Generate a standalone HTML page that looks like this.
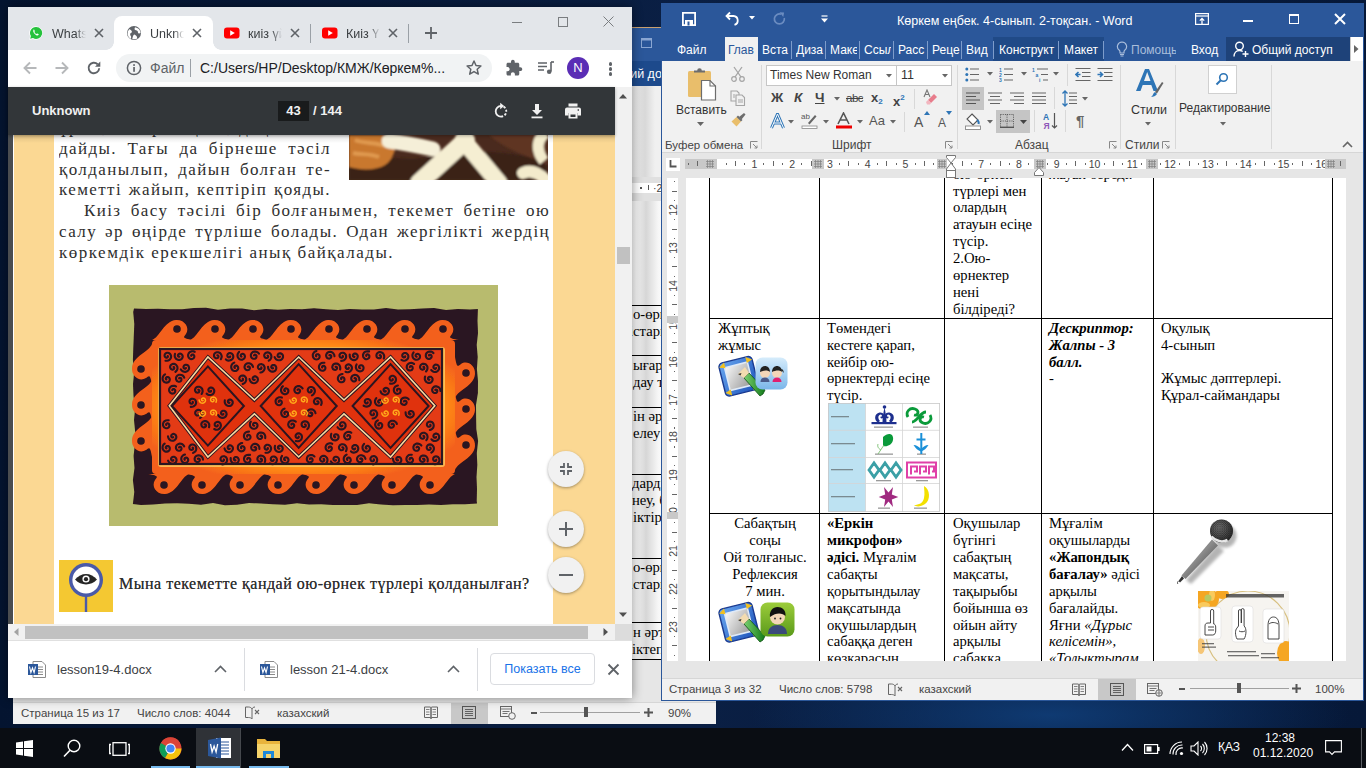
<!DOCTYPE html>
<html><head><meta charset="utf-8">
<style>
*{margin:0;padding:0;box-sizing:border-box}
html,body{width:1366px;height:768px;overflow:hidden}
body{position:relative;background:#081a38;font-family:"Liberation Sans",sans-serif;color:#000}
.a{position:absolute}
.serif{font-family:"Liberation Serif",serif}
.tt{font-size:12.5px;line-height:16px;color:#3c4043;white-space:nowrap;overflow:hidden;-webkit-mask-image:linear-gradient(90deg,#000 70%,transparent)}
.pdft{font-size:17px;line-height:21px;color:#2e2e2e;letter-spacing:1.4px;text-align:justify;text-align-last:justify;height:21px;overflow:hidden}
.pdft2{font-size:17px;line-height:21px;color:#2e2e2e;white-space:nowrap;letter-spacing:1.5px}
.zb{width:36px;height:36px;border-radius:18px;background:#f1f1f1;box-shadow:0 1px 3px rgba(0,0,0,.35)}
.zb svg{display:block}
.shelf{font-size:13px;line-height:16px;color:#3c4043;white-space:nowrap}
.wtab{top:42px;font-size:12px;line-height:16px;color:#fff;white-space:nowrap}
.rl{font-size:12px;line-height:14px;color:#444;white-space:nowrap}
.dt{font-family:"Liberation Serif",serif;font-size:14.67px;line-height:16.87px;color:#000;white-space:nowrap}
.tb{background:#000}
.rn{font-size:10.5px;line-height:14px;color:#444}
.st{top:682px;font-size:11.5px;line-height:14px;color:#444;white-space:nowrap}
</style></head>
<body>
<div class="a" style="left:0;top:0;width:1366px;height:728px;background:radial-gradient(ellipse 300px 60px at 1050px 715px,#0f3a72,rgba(15,58,114,0)),linear-gradient(90deg,#041430 0%,#0a1f44 50%,#061838 100%)"></div>
<!-- BEHIND WORD WINDOW -->
<div class="a" style="left:13px;top:27px;width:703px;height:697px;background:#e6e6e6;border-top:1px solid #c8a070"></div>
<div class="a" style="left:13px;top:28px;width:703px;height:33px;background:#2b579a"></div>
<svg class="a" style="left:641px;top:38px" width="11" height="10" viewBox="0 0 11 10"><rect x=".5" y=".5" width="10" height="9" fill="none" stroke="#8aa6d2" stroke-width="1"/><rect x=".5" y=".5" width="10" height="2" fill="#8aa6d2"/></svg>
<div class="a" style="left:13px;top:61px;width:703px;height:25px;background:#1d4a8c"></div>
<div class="a" style="left:603px;top:66px;font-size:12.5px;line-height:16px;color:#fff;white-space:nowrap">Общий доступ</div>
<div class="a" style="left:13px;top:86px;width:703px;height:91px;background:linear-gradient(90deg,#f1f1f1 0,#f1f1f1 620px,#d8d8d8 632px,#f0f0f0 642px,#f0f0f0 652px,#e2e2e2 661px)"></div>
<div class="a" style="left:13px;top:177px;width:703px;height:24px;background:#e0e0e0"></div>
<div class="a" style="left:632px;top:183px;width:50px;height:10px;background:#fff"></div>
<div class="a" style="left:640px;top:187px;width:1.5px;height:1.5px;background:#555"></div>
<div class="a" style="left:648px;top:185px;width:1px;height:5px;background:#555"></div>
<div class="a rn" style="left:653px;top:181px">·22</div>
<div class="a" style="left:13px;top:201px;width:703px;height:458px;background:linear-gradient(90deg,#fff 0,#fff 620px,#d6d6d6 633px,#f6f6f6 645px,#fdfdfd 652px,#e8e8e8 661px)"></div>
<div class="a" style="left:13px;top:659px;width:703px;height:20px;background:#e6e6e6"></div>
<div class="a tb" style="left:600px;top:304.5px;width:80px;height:1.3px"></div>
<div class="a tb" style="left:600px;top:355px;width:80px;height:1.3px"></div>
<div class="a tb" style="left:600px;top:406.5px;width:80px;height:1.3px"></div>
<div class="a tb" style="left:600px;top:473.5px;width:80px;height:1.3px"></div>
<div class="a tb" style="left:600px;top:557.5px;width:80px;height:1.3px"></div>
<div class="a tb" style="left:600px;top:622px;width:80px;height:1.3px"></div>
<div class="a tb" style="left:600px;top:659px;width:80px;height:1.3px"></div>
<div class="a dt" style="left:633px;top:306px">о-өрнек</div>
<div class="a dt" style="left:629px;top:323px">істары</div>
<div class="a dt" style="left:633px;top:357px">ығарма</div>
<div class="a dt" style="left:633px;top:374px">дау т</div>
<div class="a dt" style="left:633px;top:408px">ін әрт</div>
<div class="a dt" style="left:633px;top:425px">елеу</div>
<div class="a dt" style="left:632px;top:475px">дардың</div>
<div class="a dt" style="left:632px;top:492px">неу, б</div>
<div class="a dt" style="left:633px;top:509px">іктіру</div>
<div class="a dt" style="left:633px;top:559px">о-өрнек</div>
<div class="a dt" style="left:629px;top:576px">істары</div>
<div class="a dt" style="left:633px;top:624px">н әрт</div>
<div class="a dt" style="left:632px;top:641px">іктеп</div>
<div class="a" style="left:13px;top:702px;width:703px;height:22px;background:#f1f1f1;border-top:1px solid #d6d6d6"></div>
<div class="a st" style="left:21px;top:706px">Страница 15 из 17</div>
<div class="a st" style="left:137px;top:706px">Число слов: 4044</div>
<svg class="a" style="left:245px;top:706px" width="15" height="14" viewBox="0 0 15 14"><path d="M0.5 1h3c1.5 0 3 .8 3.5 2v10c-.5-1-2-1.5-3.5-1.5h-3z" fill="none" stroke="#666" stroke-width="1"/><path d="M7 3c.5-1.2 1.5-2 3-2" stroke="#666" stroke-width="1" fill="none"/><path d="M10 4l4 4M14 4l-4 4" stroke="#666" stroke-width="1.1"/></svg>
<div class="a st" style="left:277px;top:706px">казахский</div>
<svg class="a" style="left:424px;top:706px" width="14" height="13" viewBox="0 0 14 13"><path d="M0.5 1h5.5c.5 0 1 .3 1 1v10.5c0-.5-.5-1-1-1H.5zM13.5 1H8c-.5 0-1 .3-1 1v10.5c0-.5.5-1 1-1h5.5z" fill="none" stroke="#666" stroke-width="1"/><path d="M2 3.5h3.5M2 6h3.5M2 8.5h3.5M8.5 3.5H12M8.5 6H12M8.5 8.5H12" stroke="#666" stroke-width=".8"/></svg>
<div class="a" style="left:451px;top:703px;width:37px;height:21px;background:#c8c8c8"></div>
<svg class="a" style="left:462px;top:706px" width="14" height="13" viewBox="0 0 14 13"><rect x=".5" y=".5" width="13" height="12" fill="none" stroke="#555" stroke-width="1"/><path d="M3 3.5h8M3 5.5h8M3 7.5h8M3 9.5h8" stroke="#555" stroke-width=".9"/></svg>
<svg class="a" style="left:500px;top:706px" width="16" height="14" viewBox="0 0 16 14"><rect x=".5" y=".5" width="11" height="10" fill="none" stroke="#666" stroke-width="1"/><path d="M.5 3h11M2.5 5.5h7M2.5 7.5h5" stroke="#666" stroke-width=".9"/><circle cx="12" cy="10" r="3.3" fill="#f1f1f1" stroke="#666" stroke-width="1"/></svg>
<div class="a" style="left:531px;top:712px;width:6px;height:2px;background:#555"></div>
<div class="a" style="left:540px;top:712px;width:100px;height:1px;background:#a0a0a0"></div>
<div class="a" style="left:584px;top:707px;width:4px;height:10px;background:#555"></div>
<svg class="a" style="left:644px;top:708px" width="9" height="9" viewBox="0 0 9 9"><path d="M4.5 0v9M0 4.5h9" stroke="#555" stroke-width="2"/></svg>
<div class="a st" style="left:668px;top:706px">90%</div>
<!-- CHROME WINDOW -->
<div class="a" style="left:8px;top:7px;width:624px;height:691px;background:#fff;box-shadow:0 0 10px rgba(0,0,0,.45)"></div>
<div class="a" style="left:8px;top:7px;width:624px;height:43px;background:#e3e6ea"></div>
<!-- active tab -->
<div class="a" style="left:114px;top:16px;width:99px;height:34px;background:#fff;border-radius:8px 8px 0 0"></div>
<div class="a" style="left:106px;top:42px;width:8px;height:8px;background:radial-gradient(circle at 0 0,#e3e6ea 7.5px,#fff 8px)"></div>
<div class="a" style="left:213px;top:42px;width:8px;height:8px;background:radial-gradient(circle at 100% 0,#e3e6ea 7.5px,#fff 8px)"></div>
<!-- tab 1 whatsapp -->
<svg class="a" style="left:28px;top:25px" width="16" height="16" viewBox="0 0 16 16"><path d="M8 1.2a6.7 6.7 0 0 0-5.8 10.1L1.3 14.8l3.6-.9A6.7 6.7 0 1 0 8 1.2z" fill="#fff"/><path d="M8 2a6 6 0 0 0-5.1 9.1L2.2 13.8l2.8-.7A6 6 0 1 0 8 2z" fill="#25c23c"/><path d="M5.6 4.6c.3-.2.6 0 .7.3l.5 1.2c.1.3-.3.6-.4.8.3.8 1.2 1.6 2 2 .2-.2.5-.6.8-.5l1.2.6c.3.1.4.4.2.8-.4.7-1.1 1-1.9.7C7.3 9.9 6 8.6 5.4 7.1c-.3-.9 0-2 .2-2.5z" fill="#fff"/></svg>
<div class="a tt" style="left:52px;top:26px;width:34px">Whats</div>
<svg class="a" style="left:94px;top:28px" width="10" height="10" viewBox="0 0 10 10"><path d="M1 1L9 9M9 1L1 9" stroke="#5f6368" stroke-width="1.6"/></svg>
<!-- tab 2 active -->
<svg class="a" style="left:126px;top:25px" width="16" height="16" viewBox="0 0 16 16"><circle cx="8" cy="8" r="7" fill="#5f6368"/><path d="M3.2 4.2c1.3.3 2.1 1 2.6 2 .4 1-.6 1.5-1.3 2.1-.6.6-.4 1.9.3 2.7.5.6.4 1.8-.1 3A6.5 6.5 0 0 1 3.2 4.2zM9 2.2c-.2.9-.8 1.6-.3 2.4.5.8 2 .6 2.8 1.5.6.7.3 1.6.9 2.1.7.5 1.5.1 2.2-.3A6.6 6.6 0 0 0 9 2.2zM8.2 9.5c.9.2 2 .9 2.6 2 .3.7.1 1.6.6 2A6.6 6.6 0 0 1 6.3 14c.3-1.2.5-2.5 1-3.4.2-.5.4-1 .9-1.1z" fill="#fff"/></svg>
<div class="a tt" style="left:150px;top:26px;width:34px">Unknown</div>
<svg class="a" style="left:192px;top:28px" width="10" height="10" viewBox="0 0 10 10"><path d="M1 1L9 9M9 1L1 9" stroke="#5f6368" stroke-width="1.6"/></svg>
<!-- tab 3 -->
<svg class="a" style="left:224px;top:27px" width="16" height="12" viewBox="0 0 16 12"><rect x="0" y="0.5" width="15.5" height="11" rx="3" fill="#f00"/><path d="M6.2 3.3v5.4l4.6-2.7z" fill="#fff"/></svg>
<div class="a tt" style="left:248px;top:26px;width:34px">киіз үй</div>
<svg class="a" style="left:290px;top:28px" width="10" height="10" viewBox="0 0 10 10"><path d="M1 1L9 9M9 1L1 9" stroke="#5f6368" stroke-width="1.6"/></svg>
<div class="a" style="left:310px;top:24px;width:1px;height:19px;background:#9aa0a6"></div>
<!-- tab 4 -->
<svg class="a" style="left:322px;top:27px" width="16" height="12" viewBox="0 0 16 12"><rect x="0" y="0.5" width="15.5" height="11" rx="3" fill="#f00"/><path d="M6.2 3.3v5.4l4.6-2.7z" fill="#fff"/></svg>
<div class="a tt" style="left:346px;top:26px;width:34px">Киіз Үй</div>
<svg class="a" style="left:388px;top:28px" width="10" height="10" viewBox="0 0 10 10"><path d="M1 1L9 9M9 1L1 9" stroke="#5f6368" stroke-width="1.6"/></svg>
<div class="a" style="left:408px;top:24px;width:1px;height:19px;background:#9aa0a6"></div>
<svg class="a" style="left:424px;top:26px" width="14" height="14" viewBox="0 0 14 14"><path d="M7 1v12M1 7h12" stroke="#5f6368" stroke-width="1.8"/></svg>
<!-- window controls -->
<div class="a" style="left:512px;top:22px;width:10px;height:1px;background:#7a7d80"></div>
<div class="a" style="left:558px;top:17px;width:10px;height:10px;border:1px solid #7a7d80"></div>
<svg class="a" style="left:603px;top:16px" width="11" height="11" viewBox="0 0 11 11"><path d="M.5 .5L10.5 10.5M10.5 .5L.5 10.5" stroke="#7a7d80" stroke-width="1"/></svg>
<!-- toolbar -->
<svg class="a" style="left:22px;top:60px" width="16" height="16" viewBox="0 0 16 16"><path d="M14.5 8H2.5M8 2.5L2.5 8 8 13.5" stroke="#b6b8ba" stroke-width="1.9" fill="none"/></svg>
<svg class="a" style="left:54px;top:60px" width="16" height="16" viewBox="0 0 16 16"><path d="M1.5 8h12M8 2.5L13.5 8 8 13.5" stroke="#b6b8ba" stroke-width="1.9" fill="none"/></svg>
<svg class="a" style="left:86px;top:60px" width="16" height="16" viewBox="0 0 16 16"><path d="M13.2 8.3A5.3 5.3 0 1 1 11.6 4.2" stroke="#5f6368" stroke-width="1.9" fill="none"/><path d="M14.3 1.5v5.3H9z" fill="#5f6368"/></svg>
<div class="a" style="left:116px;top:54px;width:376px;height:28px;border-radius:14px;background:#f1f3f4"></div>
<svg class="a" style="left:126px;top:60px" width="16" height="16" viewBox="0 0 16 16"><circle cx="8" cy="8" r="6.6" stroke="#5f6368" stroke-width="1.5" fill="none"/><rect x="7.2" y="7" width="1.7" height="4.8" fill="#5f6368"/><rect x="7.2" y="4.2" width="1.7" height="1.7" fill="#5f6368"/></svg>
<div class="a" style="left:150px;top:60px;font-size:14px;color:#5f6368;line-height:16px">Файл</div>
<div class="a" style="left:190px;top:59px;width:1px;height:18px;background:#9aa0a6"></div>
<div class="a" style="left:200px;top:60px;font-size:14px;color:#202124;line-height:16px;white-space:nowrap">C:/Users/HP/Desktop/КМЖ/Көркем%...</div>
<svg class="a" style="left:465px;top:59px" width="18" height="18" viewBox="0 0 18 18"><path d="M9 2l2 4.5 4.9.5-3.7 3.3 1.1 4.8L9 12.6 4.7 15.1l1.1-4.8L2.1 7l4.9-.5z" stroke="#5f6368" stroke-width="1.5" fill="none" stroke-linejoin="round"/></svg>
<svg class="a" style="left:505px;top:59px" width="18" height="18" viewBox="0 0 24 24"><path d="M20.5 11H19V7c0-1.1-.9-2-2-2h-4V3.5C13 2.12 11.88 1 10.5 1S8 2.12 8 3.5V5H4c-1.1 0-1.99.9-1.99 2v3.8H3.5c1.49 0 2.7 1.21 2.7 2.7s-1.21 2.7-2.7 2.7H2V20c0 1.1.9 2 2 2h3.8v-1.5c0-1.49 1.21-2.7 2.7-2.7 1.49 0 2.7 1.210 2.7 2.7V22H17c1.1 0 2-.9 2-2v-4h1.5c1.38 0 2.5-1.12 2.5-2.5S21.88 11 20.5 11z" fill="#5f6368"/></svg>
<svg class="a" style="left:537px;top:60px" width="18" height="16" viewBox="0 0 18 16"><path d="M1 3h9M1 6.5h9M1 10h6" stroke="#5f6368" stroke-width="1.6"/><path d="M14 2v9.5" stroke="#5f6368" stroke-width="1.6"/><path d="M14 2h3" stroke="#5f6368" stroke-width="1.6"/><circle cx="12.2" cy="11.8" r="2.3" fill="#5f6368"/></svg>
<div class="a" style="left:567px;top:57px;width:22px;height:22px;border-radius:11px;background:#5a2db5;color:#fff;font-size:13px;text-align:center;line-height:22px">N</div>
<div class="a" style="left:608.5px;top:62px;width:3.5px;height:3.5px;border-radius:2px;background:#5f6368"></div>
<div class="a" style="left:608.5px;top:67px;width:3.5px;height:3.5px;border-radius:2px;background:#5f6368"></div>
<div class="a" style="left:608.5px;top:72px;width:3.5px;height:3.5px;border-radius:2px;background:#5f6368"></div>
<!-- pdf toolbar -->
<div class="a" style="left:8px;top:87px;width:607px;height:48px;background:#323639;box-shadow:0 1px 3px rgba(0,0,0,.3);z-index:2"></div>
<div class="a" style="left:32px;top:103px;font-size:13px;font-weight:bold;color:#f1f1f1;line-height:16px;z-index:3">Unknown</div>
<div class="a" style="left:278px;top:101px;width:31px;height:20px;background:#191b1c;color:#f1f1f1;font-size:13px;font-weight:bold;text-align:center;line-height:20px;z-index:3">43</div>
<div class="a" style="left:313px;top:103px;font-size:13px;font-weight:bold;color:#f1f1f1;line-height:16px;z-index:3">/ 144</div>
<svg class="a" style="left:492px;top:102px;z-index:3" width="18" height="18" viewBox="0 0 18 18"><path d="M9 4A5.3 5.3 0 0 0 9 14.6" stroke="#f1f1f1" stroke-width="1.8" fill="none"/><path d="M9 14.6A5.3 5.3 0 0 0 9 4" stroke="#f1f1f1" stroke-width="1.8" fill="none" stroke-dasharray="2.2 1.6"/><path d="M8.2 0.8v6.4l4-3.2z" fill="#f1f1f1"/></svg>
<svg class="a" style="left:528px;top:102px;z-index:3" width="18" height="18" viewBox="0 0 18 18"><path d="M7 2h4v6h3l-5 5-5-5h3z" fill="#f1f1f1"/><rect x="3.5" y="14.5" width="11" height="1.8" fill="#f1f1f1"/></svg>
<svg class="a" style="left:564px;top:102px;z-index:3" width="18" height="18" viewBox="0 0 18 18"><rect x="4.5" y="1.5" width="9" height="3" fill="#f1f1f1"/><path d="M3 5.5h12a2 2 0 0 1 2 2v6h-3.5v-2.5h-9v2.5H1v-6a2 2 0 0 1 2-2z" fill="#f1f1f1"/><path d="M4.5 11h9v5.5h-9z" fill="#f1f1f1"/><path d="M6.5 12.5h5v2.5h-5z" fill="#323639"/><rect x="13.6" y="7.3" width="1.4" height="1.4" fill="#323639"/></svg>
<!-- scrollbar vertical -->
<div class="a" style="left:615px;top:87px;width:17px;height:537px;background:#f1f1f1"></div>
<svg class="a" style="left:618px;top:92px" width="10" height="8" viewBox="0 0 10 8"><path d="M1 6.5h8L5 2z" fill="#505050"/></svg>
<div class="a" style="left:617px;top:247px;width:13px;height:17px;background:#c1c1c1"></div>
<svg class="a" style="left:618px;top:611px" width="10" height="8" viewBox="0 0 10 8"><path d="M1 1.5h8L5 6z" fill="#505050"/></svg>
<!-- PDF CONTENT -->
<div class="a" style="left:8px;top:135px;width:5px;height:489px;background:#4a4d50"></div>
<div class="a" style="left:13px;top:135px;width:602px;height:489px;background:#fff"></div>
<div class="a" style="left:14px;top:135px;width:40px;height:489px;background:#fbd893"></div>
<div class="a" style="left:553px;top:135px;width:62px;height:489px;background:#fbd893"></div>
<div class="a" style="left:13px;top:135px;width:602px;height:8px;background:linear-gradient(rgba(0,0,0,.12),rgba(0,0,0,0))"></div>
<!-- felt photo -->
<svg class="a" style="left:349px;top:135px" width="199" height="45" viewBox="0 0 199 45">
<defs><filter id="bl1"><feGaussianBlur stdDeviation="1.3"/></filter></defs>
<rect width="199" height="45" fill="#4a2a1e"/>
<g filter="url(#bl1)">
<path d="M0 22c20-6 50 6 80 0s60-10 118 4v19H0z" fill="#3a2018"/>
<path d="M140 0h58v30c-20-10-40-14-58-30z" fill="#5e3624"/>
<path d="M0 0h46c3 10-1 24-10 30-8 5-22 6-36 2z" fill="#c9782e"/>
<path d="M6 5c10 4 20 2 30 6M4 18c8 2 16 0 26 4" stroke="#e09a50" stroke-width="4" fill="none"/>
<path d="M40 6c16 2 30 5 44 8" stroke="#f5efd8" stroke-width="15" fill="none" stroke-linecap="round"/>
<path d="M70 48L117 5" stroke="#f5eed2" stroke-width="18" fill="none" stroke-linecap="round"/>
<path d="M114 5L150 48" stroke="#f5eed2" stroke-width="17" fill="none" stroke-linecap="round"/>
<path d="M197 -2c-10 6-10 18 -2 28" stroke="#f3ebcc" stroke-width="11" fill="none"/>
<path d="M174 38c8-4 16 0 24 8" stroke="#f3ebcc" stroke-width="12" fill="none" stroke-linecap="round"/>
</g>
</svg>
<div class="a serif pdft" style="left:59px;top:117px;width:272px">ұрып, шиыршықтап, дөңгелетіп</div>
<div class="a serif pdft" style="left:59px;top:138px;width:272px">дайды. Тағы да бірнеше тәсіл</div>
<div class="a serif pdft" style="left:59px;top:159px;width:272px">қолданылып, дайын болған те-</div>
<div class="a serif pdft" style="left:59px;top:179px;width:272px">кеметті жайып, кептіріп қояды.</div>
<div class="a serif pdft" style="left:84px;top:200px;width:466px">Киіз басу тәсілі бір болғанымен, текемет бетіне ою</div>
<div class="a serif pdft" style="left:59px;top:221px;width:491px">салу әр өңірде түрліше болады. Одан жергілікті жердің</div>
<div class="a serif pdft2" style="left:59px;top:242px;width:360px">көркемдік ерекшелігі анық байқалады.</div>
<!-- carpet -->
<svg class="a" style="left:109px;top:285px" width="389" height="241" viewBox="0 0 389 241">
<defs><filter id="bl2" x="-5%" y="-5%" width="110%" height="110%"><feGaussianBlur stdDeviation="0.75"/></filter><linearGradient id="ogt" x1="0" y1="0" x2="0" y2="1"><stop offset="0" stop-color="#f04818"/><stop offset="1" stop-color="#ff9a10"/></linearGradient><radialGradient id="ogr" cx="50%" cy="50%" r="58%"><stop offset="0.6" stop-color="#ffb020"/><stop offset="0.8" stop-color="#ff8a14"/><stop offset="1" stop-color="#f3601c"/></radialGradient></defs>
<rect width="389" height="241" fill="#b8bb6e"/>
<g filter="url(#bl2)">
<path d="M25.0 23.4 L37.0 24.1 L49.0 23.7 L61.0 24.2 L73.0 24.3 L85.0 23.0 L97.0 22.8 L109.0 24.8 L121.0 23.4 L133.0 23.4 L145.0 25.2 L157.0 23.9 L169.0 24.8 L181.0 23.9 L193.0 24.3 L205.0 23.2 L217.0 24.3 L229.0 24.9 L241.0 24.1 L253.0 24.6 L265.0 24.4 L277.0 23.0 L289.0 24.6 L301.0 24.2 L313.0 23.5 L325.0 22.9 L337.0 24.9 L349.0 23.9 L361.0 24.5 L368.9 24.0 L368.5 36.0 L369.0 48.0 L367.7 60.0 L368.7 72.0 L367.9 84.0 L369.0 96.0 L368.9 108.0 L367.0 120.0 L367.1 132.0 L367.3 144.0 L369.1 156.0 L367.8 168.0 L368.3 180.0 L367.5 192.0 L368.0 204.0 L367.7 216.0 L368.0 218.6 L356.0 219.2 L344.0 219.2 L332.0 220.0 L320.0 219.4 L308.0 220.0 L296.0 219.9 L284.0 220.2 L272.0 219.4 L260.0 218.2 L248.0 219.9 L236.0 220.1 L224.0 220.0 L212.0 219.2 L200.0 219.5 L188.0 218.3 L176.0 219.8 L164.0 219.2 L152.0 218.5 L140.0 218.0 L128.0 219.8 L116.0 220.2 L104.0 218.0 L92.0 219.7 L80.0 218.8 L68.0 218.2 L56.0 218.5 L44.0 219.6 L32.0 219.9 L23.9 219.0 L25.3 207.0 L23.9 195.0 L25.5 183.0 L24.6 171.0 L25.9 159.0 L26.2 147.0 L25.0 135.0 L26.2 123.0 L24.5 111.0 L24.0 99.0 L25.2 87.0 L23.9 75.0 L24.3 63.0 L24.8 51.0 L25.3 39.0 L24.2 27.0z" fill="#2b1420"/>
<defs><path id="wv" d="M-1 1 C7 4 11 20 23 21 C32 21.5 37 13 33 7 C31 4 28 3 40 1z" fill="#f3601c"/></defs>
<rect x="43" y="55" width="303" height="134" rx="4" fill="url(#ogr)"/>
<use href="#wv" transform="translate(44,56) scale(1,-1)"/>
<circle cx="68" cy="44" r="3.8" fill="#2b1420"/>
<use href="#wv" transform="translate(82,56) scale(1,-1)"/>
<circle cx="106" cy="44" r="3.8" fill="#2b1420"/>
<use href="#wv" transform="translate(120,56) scale(1,-1)"/>
<circle cx="144" cy="44" r="3.8" fill="#2b1420"/>
<use href="#wv" transform="translate(158,56) scale(1,-1)"/>
<circle cx="182" cy="44" r="3.8" fill="#2b1420"/>
<use href="#wv" transform="translate(196,56) scale(1,-1)"/>
<circle cx="220" cy="44" r="3.8" fill="#2b1420"/>
<use href="#wv" transform="translate(234,56) scale(1,-1)"/>
<circle cx="258" cy="44" r="3.8" fill="#2b1420"/>
<use href="#wv" transform="translate(272,56) scale(1,-1)"/>
<circle cx="296" cy="44" r="3.8" fill="#2b1420"/>
<use href="#wv" transform="translate(310,56) scale(1,-1)"/>
<circle cx="334" cy="44" r="3.8" fill="#2b1420"/>
<use href="#wv" transform="translate(345,188) scale(-1,1)"/>
<circle cx="321" cy="200" r="3.8" fill="#2b1420"/>
<use href="#wv" transform="translate(307,188) scale(-1,1)"/>
<circle cx="283" cy="200" r="3.8" fill="#2b1420"/>
<use href="#wv" transform="translate(269,188) scale(-1,1)"/>
<circle cx="245" cy="200" r="3.8" fill="#2b1420"/>
<use href="#wv" transform="translate(231,188) scale(-1,1)"/>
<circle cx="207" cy="200" r="3.8" fill="#2b1420"/>
<use href="#wv" transform="translate(193,188) scale(-1,1)"/>
<circle cx="169" cy="200" r="3.8" fill="#2b1420"/>
<use href="#wv" transform="translate(155,188) scale(-1,1)"/>
<circle cx="131" cy="200" r="3.8" fill="#2b1420"/>
<use href="#wv" transform="translate(117,188) scale(-1,1)"/>
<circle cx="93" cy="200" r="3.8" fill="#2b1420"/>
<use href="#wv" transform="translate(79,188) scale(-1,1)"/>
<circle cx="55" cy="200" r="3.8" fill="#2b1420"/>
<use href="#wv" transform="translate(44,60) rotate(90)"/>
<circle cx="32" cy="84" r="3.8" fill="#2b1420"/>
<use href="#wv" transform="translate(44,96) rotate(90)"/>
<circle cx="32" cy="120" r="3.8" fill="#2b1420"/>
<use href="#wv" transform="translate(44,132) rotate(90)"/>
<circle cx="32" cy="156" r="3.8" fill="#2b1420"/>
<use href="#wv" transform="translate(345,184) rotate(-90)"/>
<circle cx="357" cy="160" r="3.8" fill="#2b1420"/>
<use href="#wv" transform="translate(345,148) rotate(-90)"/>
<circle cx="357" cy="124" r="3.8" fill="#2b1420"/>
<use href="#wv" transform="translate(345,112) rotate(-90)"/>
<circle cx="357" cy="88" r="3.8" fill="#2b1420"/>
<rect x="49" y="62" width="287" height="120" rx="3" fill="#ffd060" opacity=".8"/>
<rect x="51" y="64" width="282" height="115" fill="#e33a18" stroke="#2b1420" stroke-width="2.2"/>
<path d="M60.3 120.8 L98.9 72 L145.4 115 L189.7 72 L235 115 L281.6 72 L325.8 120.8 L281.6 172 L235 128.8 L189.7 172 L145.4 128.8 L98.9 172z" fill="#e0300e" stroke="#2b1420" stroke-width="3.5"/>
<path d="M60.3 120.8 L98.9 72 L145.4 115 L189.7 72 L235 115 L281.6 72 L325.8 120.8 L281.6 172 L235 128.8 L189.7 172 L145.4 128.8 L98.9 172z" fill="none" stroke="#f8d8a0" stroke-width="1.6"/>
<path d="M62.900000000000006 121 L98.9 81.4 L134.9 121 L98.9 160.6z" fill="none" stroke="#2b1420" stroke-width="2"/>
<path d="M151.7 121 L189.7 79.2 L227.7 121 L189.7 162.8z" fill="none" stroke="#2b1420" stroke-width="2"/>
<path d="M243.60000000000002 121 L281.6 79.2 L319.6 121 L281.6 162.8z" fill="none" stroke="#2b1420" stroke-width="2"/>
<path d="M58.8 71.0 L58.9 71.3 L58.9 71.6 L58.8 71.9 L58.5 72.2 L58.2 72.5 L57.7 72.6 L57.2 72.6 L56.6 72.4 L56.2 72.0 L55.8 71.5 L55.6 70.8 L55.6 70.1 L55.8 69.4 L56.3 68.7 L57.0 68.1 L57.9 67.8 L58.8 67.8 L59.8 68.0 L60.7 68.5 L61.4 69.4 L61.9 70.4 L62.1 71.5 L61.9 72.8 L61.3 73.9 L60.4 74.8 L59.2 75.5 L57.9 75.8 L56.5 75.8" fill="none" stroke="#2b1420" stroke-width="2.1" stroke-linecap="round"/>
<path d="M70.4 71.7 L70.1 71.8 L69.8 71.8 L69.5 71.6 L69.2 71.4 L69.0 71.0 L68.9 70.5 L69.0 70.0 L69.3 69.5 L69.7 69.0 L70.3 68.7 L71.0 68.6 L71.7 68.7 L72.4 69.1 L73.0 69.6 L73.5 70.4 L73.7 71.3 L73.6 72.2 L73.2 73.2 L72.6 74.0 L71.7 74.6 L70.6 74.9 L69.4 74.9 L68.3 74.6 L67.2 73.9 L66.4 72.9 L65.8 71.7 L65.7 70.3 L66.0 68.9" fill="none" stroke="#2b1420" stroke-width="2.1" stroke-linecap="round"/>
<path d="M82.3 70.8 L82.2 70.5 L82.3 70.2 L82.5 69.9 L82.8 69.7 L83.2 69.5 L83.7 69.5 L84.2 69.6 L84.7 70.0 L85.0 70.5 L85.3 71.1 L85.3 71.8 L85.1 72.5 L84.7 73.1 L84.0 73.7 L83.2 74.0 L82.3 74.1 L81.4 73.9 L80.5 73.4 L79.8 72.7 L79.3 71.7 L79.1 70.6 L79.2 69.4 L79.7 68.3 L80.5 67.4 L81.6 66.7 L82.9 66.3 L84.3 66.3 L85.7 66.8" fill="none" stroke="#2b1420" stroke-width="2.1" stroke-linecap="round"/>
<path d="M108.3 70.3 L108.6 70.3 L108.9 70.4 L109.1 70.6 L109.4 71.0 L109.5 71.4 L109.4 71.9 L109.2 72.4 L108.8 72.8 L108.3 73.1 L107.6 73.2 L106.9 73.2 L106.3 72.9 L105.7 72.4 L105.2 71.7 L105.0 70.8 L105.0 69.9 L105.3 69.0 L105.9 68.2 L106.7 67.6 L107.8 67.2 L108.9 67.2 L110.0 67.5 L111.1 68.1 L111.9 69.0 L112.5 70.2 L112.7 71.6 L112.4 72.9 L111.8 74.2" fill="none" stroke="#2b1420" stroke-width="2.1" stroke-linecap="round"/>
<path d="M121.2 71.4 L121.1 71.7 L121.0 71.9 L120.7 72.2 L120.3 72.3 L119.9 72.4 L119.4 72.3 L119.0 72.0 L118.6 71.6 L118.4 71.0 L118.3 70.3 L118.5 69.7 L118.9 69.0 L119.4 68.5 L120.2 68.1 L121.0 68.0 L121.9 68.2 L122.8 68.6 L123.5 69.3 L124.0 70.2 L124.3 71.3 L124.2 72.4 L123.8 73.5 L123.0 74.4 L121.9 75.1 L120.7 75.5 L119.3 75.6 L118.0 75.2 L116.8 74.4" fill="none" stroke="#2b1420" stroke-width="2.1" stroke-linecap="round"/>
<path d="M132.5 71.6 L132.3 71.5 L132.0 71.4 L131.8 71.1 L131.7 70.7 L131.7 70.2 L131.9 69.8 L132.2 69.4 L132.7 69.1 L133.3 68.9 L133.9 68.9 L134.6 69.2 L135.2 69.6 L135.6 70.3 L135.9 71.1 L135.9 71.9 L135.6 72.8 L135.1 73.6 L134.3 74.2 L133.3 74.6 L132.3 74.7 L131.2 74.5 L130.1 73.9 L129.3 73.0 L128.7 71.9 L128.5 70.6 L128.6 69.3 L129.2 68.0 L130.1 66.9" fill="none" stroke="#2b1420" stroke-width="2.1" stroke-linecap="round"/>
<path d="M145.0 70.5 L145.1 70.2 L145.3 70.0 L145.6 69.8 L146.0 69.7 L146.4 69.8 L146.9 70.0 L147.2 70.4 L147.5 70.9 L147.5 71.5 L147.4 72.2 L147.1 72.8 L146.6 73.3 L145.9 73.7 L145.1 73.8 L144.2 73.7 L143.4 73.4 L142.7 72.7 L142.1 71.9 L141.9 70.9 L141.9 69.8 L142.3 68.7 L143.0 67.8 L144.0 67.0 L145.2 66.6 L146.5 66.6 L147.8 66.9 L149.0 67.6 L149.9 68.7" fill="none" stroke="#2b1420" stroke-width="2.1" stroke-linecap="round"/>
<path d="M158.6 70.5 L158.8 70.7 L159.0 70.9 L159.2 71.2 L159.2 71.7 L159.1 72.1 L158.8 72.5 L158.4 72.8 L157.8 73.0 L157.2 73.0 L156.6 72.8 L156.0 72.4 L155.5 71.8 L155.3 71.0 L155.2 70.2 L155.4 69.4 L155.9 68.6 L156.6 68.0 L157.6 67.5 L158.6 67.4 L159.7 67.6 L160.7 68.1 L161.5 68.9 L162.1 70.0 L162.4 71.2 L162.3 72.5 L161.8 73.8 L160.9 74.9 L159.7 75.7" fill="none" stroke="#2b1420" stroke-width="2.1" stroke-linecap="round"/>
<path d="M170.9 71.6 L170.7 71.9 L170.5 72.1 L170.1 72.1 L169.7 72.1 L169.3 71.9 L168.9 71.6 L168.7 71.1 L168.6 70.6 L168.7 70.0 L168.9 69.4 L169.4 68.8 L170.0 68.5 L170.8 68.3 L171.6 68.4 L172.4 68.7 L173.2 69.3 L173.7 70.0 L174.0 71.0 L174.0 72.0 L173.7 73.1 L173.0 74.0 L172.1 74.8 L171.0 75.2 L169.7 75.3 L168.4 75.0 L167.2 74.4 L166.3 73.4 L165.6 72.1" fill="none" stroke="#2b1420" stroke-width="2.1" stroke-linecap="round"/>
<path d="M207.3 71.3 L207.1 71.1 L207.0 70.8 L206.9 70.5 L207.0 70.1 L207.3 69.7 L207.6 69.4 L208.1 69.2 L208.7 69.2 L209.3 69.3 L209.8 69.7 L210.3 70.2 L210.6 70.9 L210.6 71.7 L210.5 72.5 L210.1 73.2 L209.4 73.9 L208.5 74.3 L207.5 74.5 L206.5 74.3 L205.5 73.9 L204.7 73.1 L204.1 72.1 L203.8 70.9 L203.8 69.7 L204.3 68.4 L205.1 67.3 L206.2 66.5 L207.5 66.0" fill="none" stroke="#2b1420" stroke-width="2.1" stroke-linecap="round"/>
<path d="M220.3 70.3 L220.5 70.1 L220.8 70.0 L221.2 70.0 L221.6 70.1 L221.9 70.4 L222.2 70.8 L222.3 71.3 L222.2 71.9 L222.0 72.5 L221.6 73.0 L221.0 73.4 L220.3 73.6 L219.5 73.5 L218.7 73.3 L218.0 72.7 L217.5 72.0 L217.2 71.1 L217.1 70.1 L217.4 69.1 L218.0 68.2 L218.8 67.4 L219.9 67.0 L221.1 66.8 L222.4 67.0 L223.5 67.6 L224.5 68.6 L225.2 69.8 L225.5 71.2" fill="none" stroke="#2b1420" stroke-width="2.1" stroke-linecap="round"/>
<path d="M233.7 70.9 L233.9 71.1 L234.0 71.4 L233.9 71.8 L233.7 72.2 L233.4 72.5 L233.0 72.7 L232.4 72.7 L231.9 72.6 L231.3 72.3 L230.9 71.8 L230.6 71.2 L230.5 70.5 L230.6 69.7 L231.0 69.0 L231.6 68.3 L232.4 67.9 L233.3 67.7 L234.3 67.8 L235.3 68.2 L236.1 68.9 L236.8 69.8 L237.1 70.9 L237.1 72.2 L236.7 73.4 L236.0 74.4 L234.9 75.3 L233.6 75.8 L232.2 75.9" fill="none" stroke="#2b1420" stroke-width="2.1" stroke-linecap="round"/>
<path d="M245.5 71.7 L245.3 71.9 L244.9 71.9 L244.6 71.8 L244.3 71.6 L244.0 71.2 L243.9 70.7 L243.9 70.2 L244.1 69.7 L244.4 69.2 L245.0 68.8 L245.6 68.6 L246.4 68.6 L247.1 68.8 L247.8 69.3 L248.3 69.9 L248.7 70.8 L248.7 71.7 L248.5 72.7 L248.0 73.6 L247.2 74.4 L246.2 74.9 L245.0 75.1 L243.8 74.9 L242.7 74.4 L241.7 73.5 L241.0 72.3 L240.7 71.0 L240.7 69.6" fill="none" stroke="#2b1420" stroke-width="2.1" stroke-linecap="round"/>
<path d="M257.3 70.9 L257.2 70.6 L257.2 70.3 L257.3 70.0 L257.6 69.7 L258.0 69.5 L258.5 69.4 L259.0 69.5 L259.5 69.7 L259.9 70.2 L260.3 70.7 L260.4 71.4 L260.3 72.2 L260.0 72.9 L259.4 73.5 L258.7 73.9 L257.8 74.2 L256.8 74.1 L255.9 73.8 L255.1 73.1 L254.4 72.3 L254.1 71.2 L254.0 70.0 L254.4 68.8 L255.0 67.8 L256.0 66.9 L257.2 66.4 L258.6 66.2 L260.1 66.4" fill="none" stroke="#2b1420" stroke-width="2.1" stroke-linecap="round"/>
<path d="M270.7 70.3 L271.0 70.2 L271.3 70.3 L271.6 70.5 L271.8 70.8 L272.0 71.2 L272.0 71.7 L271.9 72.2 L271.6 72.7 L271.1 73.0 L270.5 73.3 L269.8 73.3 L269.1 73.1 L268.4 72.7 L267.8 72.1 L267.5 71.3 L267.4 70.4 L267.6 69.4 L268.0 68.6 L268.7 67.8 L269.7 67.3 L270.8 67.1 L272.0 67.2 L273.1 67.7 L274.1 68.5 L274.8 69.6 L275.2 70.9 L275.2 72.2 L274.8 73.6" fill="none" stroke="#2b1420" stroke-width="2.1" stroke-linecap="round"/>
<path d="M296.2 71.3 L296.2 71.6 L296.1 71.9 L295.9 72.1 L295.5 72.4 L295.1 72.5 L294.6 72.4 L294.2 72.2 L293.7 71.8 L293.4 71.3 L293.3 70.7 L293.3 70.0 L293.6 69.3 L294.1 68.7 L294.8 68.2 L295.6 68.0 L296.5 68.0 L297.4 68.3 L298.2 68.9 L298.9 69.7 L299.3 70.7 L299.4 71.8 L299.1 73.0 L298.5 74.0 L297.5 74.9 L296.4 75.5 L295.0 75.7 L293.7 75.5 L292.4 74.9" fill="none" stroke="#2b1420" stroke-width="2.1" stroke-linecap="round"/>
<path d="M307.6 71.7 L307.4 71.6 L307.1 71.5 L306.8 71.2 L306.6 70.9 L306.6 70.4 L306.7 70.0 L307.0 69.5 L307.4 69.1 L308.0 68.9 L308.6 68.8 L309.3 69.0 L309.9 69.3 L310.5 69.9 L310.9 70.6 L311.0 71.5 L310.9 72.4 L310.5 73.3 L309.8 74.0 L308.9 74.5 L307.8 74.8 L306.7 74.7 L305.6 74.3 L304.6 73.6 L303.9 72.5 L303.5 71.3 L303.4 69.9 L303.8 68.6 L304.6 67.4" fill="none" stroke="#2b1420" stroke-width="2.1" stroke-linecap="round"/>
<path d="M319.9 70.6 L320.0 70.3 L320.1 70.0 L320.4 69.8 L320.8 69.7 L321.2 69.7 L321.7 69.8 L322.1 70.2 L322.4 70.6 L322.6 71.2 L322.6 71.9 L322.4 72.5 L321.9 73.1 L321.3 73.6 L320.5 73.9 L319.6 73.9 L318.8 73.7 L317.9 73.1 L317.3 72.4 L316.9 71.4 L316.8 70.3 L317.0 69.2 L317.5 68.2 L318.4 67.3 L319.5 66.7 L320.8 66.5 L322.1 66.6 L323.4 67.1 L324.5 68.1" fill="none" stroke="#2b1420" stroke-width="2.1" stroke-linecap="round"/>
<path d="M64.5 82.0 L64.8 82.0 L65.0 82.3 L65.2 82.6 L65.3 83.0 L65.2 83.4 L65.0 83.8 L64.6 84.2 L64.1 84.5 L63.5 84.6 L62.9 84.5 L62.2 84.1 L61.7 83.6 L61.3 82.9 L61.1 82.1 L61.2 81.3 L61.6 80.4 L62.2 79.7 L63.0 79.2 L64.1 78.9 L65.1 78.9 L66.2 79.2 L67.2 79.9 L67.9 80.9 L68.4 82.1 L68.5 83.4 L68.2 84.7 L67.5 85.9 L66.4 86.9" fill="none" stroke="#2b1420" stroke-width="2.1" stroke-linecap="round"/>
<path d="M77.0 83.1 L76.8 83.3 L76.6 83.5 L76.3 83.7 L75.9 83.7 L75.4 83.6 L75.0 83.3 L74.7 82.9 L74.5 82.4 L74.5 81.7 L74.7 81.1 L75.1 80.5 L75.7 80.1 L76.4 79.8 L77.2 79.7 L78.1 79.9 L78.9 80.4 L79.5 81.1 L79.9 82.0 L80.1 83.0 L79.9 84.1 L79.4 85.1 L78.6 86.0 L77.6 86.6 L76.4 86.9 L75.1 86.8 L73.8 86.3 L72.7 85.5 L71.8 84.3" fill="none" stroke="#2b1420" stroke-width="2.1" stroke-linecap="round"/>
<path d="M125.9 82.9 L125.6 82.7 L125.4 82.5 L125.4 82.1 L125.4 81.7 L125.6 81.3 L125.9 81.0 L126.3 80.7 L126.9 80.6 L127.5 80.6 L128.1 80.9 L128.6 81.4 L129.0 82.0 L129.2 82.8 L129.2 83.6 L128.9 84.4 L128.3 85.1 L127.5 85.7 L126.6 86.0 L125.5 86.0 L124.5 85.7 L123.5 85.1 L122.8 84.2 L122.3 83.1 L122.2 81.8 L122.4 80.5 L123.0 79.3 L124.0 78.3 L125.3 77.6" fill="none" stroke="#2b1420" stroke-width="2.1" stroke-linecap="round"/>
<path d="M138.7 81.8 L138.9 81.6 L139.2 81.5 L139.5 81.4 L139.9 81.5 L140.3 81.7 L140.6 82.1 L140.8 82.6 L140.9 83.1 L140.7 83.7 L140.4 84.3 L139.9 84.8 L139.2 85.1 L138.4 85.2 L137.6 85.0 L136.8 84.6 L136.2 83.9 L135.7 83.1 L135.5 82.1 L135.7 81.1 L136.1 80.1 L136.8 79.2 L137.8 78.6 L139.0 78.3 L140.3 78.3 L141.5 78.7 L142.6 79.5 L143.5 80.6 L144.0 81.9" fill="none" stroke="#2b1420" stroke-width="2.1" stroke-linecap="round"/>
<path d="M152.2 82.3 L152.4 82.5 L152.5 82.8 L152.5 83.2 L152.4 83.5 L152.1 83.9 L151.7 84.1 L151.2 84.3 L150.6 84.3 L150.0 84.0 L149.5 83.6 L149.1 83.1 L148.9 82.3 L148.9 81.6 L149.2 80.8 L149.7 80.1 L150.4 79.5 L151.3 79.2 L152.3 79.1 L153.3 79.4 L154.3 79.9 L155.0 80.8 L155.5 81.8 L155.7 83.0 L155.5 84.3 L154.9 85.5 L154.0 86.5 L152.8 87.2 L151.4 87.5" fill="none" stroke="#2b1420" stroke-width="2.1" stroke-linecap="round"/>
<path d="M164.1 83.2 L163.9 83.4 L163.6 83.5 L163.2 83.4 L162.9 83.2 L162.6 82.9 L162.3 82.5 L162.3 82.0 L162.4 81.4 L162.7 80.9 L163.1 80.4 L163.8 80.1 L164.5 80.0 L165.3 80.1 L166.0 80.4 L166.6 81.0 L167.1 81.8 L167.3 82.8 L167.2 83.8 L166.9 84.7 L166.2 85.6 L165.3 86.2 L164.1 86.6 L162.9 86.6 L161.7 86.2 L160.6 85.5 L159.7 84.5 L159.2 83.2 L159.1 81.8" fill="none" stroke="#2b1420" stroke-width="2.1" stroke-linecap="round"/>
<path d="M213.3 82.5 L213.1 82.3 L213.1 82.0 L213.2 81.6 L213.4 81.3 L213.8 81.0 L214.2 80.9 L214.8 80.9 L215.3 81.0 L215.8 81.4 L216.2 81.9 L216.4 82.6 L216.4 83.3 L216.2 84.1 L215.8 84.8 L215.1 85.3 L214.3 85.7 L213.3 85.8 L212.3 85.6 L211.4 85.1 L210.7 84.3 L210.1 83.3 L209.9 82.1 L210.1 80.9 L210.6 79.7 L211.4 78.8 L212.6 78.0 L213.9 77.7 L215.4 77.7" fill="none" stroke="#2b1420" stroke-width="2.1" stroke-linecap="round"/>
<path d="M226.6 81.8 L226.8 81.7 L227.2 81.7 L227.5 81.8 L227.8 82.1 L228.0 82.5 L228.1 82.9 L228.0 83.5 L227.8 84.0 L227.4 84.4 L226.8 84.7 L226.1 84.9 L225.4 84.8 L224.7 84.5 L224.0 84.0 L223.6 83.2 L223.3 82.4 L223.4 81.4 L223.7 80.5 L224.3 79.6 L225.2 79.0 L226.2 78.6 L227.4 78.5 L228.6 78.8 L229.7 79.5 L230.5 80.4 L231.1 81.7 L231.3 83.0 L231.1 84.5" fill="none" stroke="#2b1420" stroke-width="2.1" stroke-linecap="round"/>
<path d="M239.7 82.7 L239.8 82.9 L239.7 83.3 L239.6 83.6 L239.3 83.8 L238.8 84.0 L238.4 84.0 L237.8 83.9 L237.4 83.6 L237.0 83.1 L236.7 82.5 L236.7 81.8 L236.8 81.1 L237.2 80.4 L237.9 79.9 L238.6 79.5 L239.5 79.4 L240.5 79.5 L241.4 80.0 L242.1 80.7 L242.7 81.6 L242.9 82.7 L242.8 83.9 L242.4 85.0 L241.6 86.0 L240.5 86.8 L239.2 87.2 L237.8 87.2 L236.5 86.8" fill="none" stroke="#2b1420" stroke-width="2.1" stroke-linecap="round"/>
<path d="M251.2 83.2 L251.0 83.2 L250.7 83.1 L250.4 82.9 L250.1 82.6 L250.0 82.1 L250.1 81.7 L250.3 81.2 L250.6 80.7 L251.1 80.4 L251.8 80.2 L252.5 80.3 L253.2 80.5 L253.8 81.0 L254.3 81.7 L254.5 82.5 L254.5 83.4 L254.3 84.4 L253.7 85.2 L252.9 85.9 L251.9 86.3 L250.8 86.4 L249.6 86.1 L248.5 85.5 L247.7 84.6 L247.1 83.5 L246.8 82.1 L247.0 80.7 L247.6 79.4" fill="none" stroke="#2b1420" stroke-width="2.1" stroke-linecap="round"/>
<path d="M300.8 82.2 L300.9 81.9 L301.0 81.6 L301.2 81.3 L301.6 81.1 L302.0 81.1 L302.5 81.2 L303.0 81.4 L303.4 81.9 L303.6 82.4 L303.7 83.1 L303.6 83.8 L303.2 84.4 L302.7 85.0 L301.9 85.3 L301.1 85.5 L300.2 85.4 L299.3 85.0 L298.5 84.3 L298.0 83.4 L297.7 82.4 L297.8 81.3 L298.1 80.2 L298.9 79.2 L299.9 78.4 L301.1 78.0 L302.5 77.9 L303.8 78.2 L305.1 79.0" fill="none" stroke="#2b1420" stroke-width="2.1" stroke-linecap="round"/>
<path d="M314.4 81.9 L314.7 81.9 L315.0 82.1 L315.2 82.4 L315.3 82.8 L315.3 83.2 L315.2 83.7 L314.9 84.1 L314.4 84.4 L313.8 84.6 L313.2 84.6 L312.5 84.4 L311.9 84.0 L311.4 83.3 L311.1 82.6 L311.1 81.7 L311.3 80.8 L311.8 80.0 L312.6 79.3 L313.5 78.9 L314.6 78.8 L315.7 79.0 L316.8 79.5 L317.6 80.3 L318.3 81.4 L318.5 82.7 L318.4 84.0 L317.9 85.3 L317.0 86.5" fill="none" stroke="#2b1420" stroke-width="2.1" stroke-linecap="round"/>
<path d="M327.1 83.0 L327.0 83.3 L326.8 83.5 L326.5 83.7 L326.1 83.8 L325.6 83.7 L325.2 83.5 L324.8 83.1 L324.5 82.6 L324.4 82.0 L324.5 81.4 L324.8 80.8 L325.3 80.2 L326.0 79.8 L326.8 79.6 L327.7 79.7 L328.5 80.0 L329.3 80.6 L329.8 81.5 L330.1 82.5 L330.1 83.6 L329.8 84.6 L329.1 85.6 L328.2 86.4 L327.0 86.9 L325.7 87.0 L324.4 86.7 L323.2 86.0 L322.2 85.0" fill="none" stroke="#2b1420" stroke-width="2.1" stroke-linecap="round"/>
<path d="M57.4 94.5 L57.2 94.4 L57.0 94.1 L56.8 93.8 L56.8 93.4 L56.9 93.0 L57.2 92.6 L57.6 92.2 L58.1 92.0 L58.7 92.0 L59.4 92.2 L59.9 92.6 L60.4 93.1 L60.7 93.8 L60.8 94.7 L60.6 95.5 L60.2 96.3 L59.5 97.0 L58.6 97.4 L57.6 97.6 L56.5 97.5 L55.4 97.0 L54.6 96.2 L53.9 95.2 L53.6 94.0 L53.7 92.6 L54.1 91.4 L54.9 90.2 L56.1 89.4" fill="none" stroke="#2b1420" stroke-width="2.1" stroke-linecap="round"/>
<path d="M70.1 93.4 L70.2 93.1 L70.5 92.9 L70.9 92.8 L71.3 92.9 L71.7 93.0 L72.0 93.4 L72.3 93.8 L72.4 94.4 L72.4 95.0 L72.1 95.6 L71.7 96.1 L71.1 96.5 L70.3 96.7 L69.5 96.7 L68.7 96.4 L67.9 95.9 L67.4 95.1 L67.0 94.1 L67.0 93.1 L67.3 92.0 L67.9 91.1 L68.7 90.3 L69.9 89.8 L71.1 89.7 L72.4 89.9 L73.6 90.5 L74.6 91.4 L75.3 92.7" fill="none" stroke="#2b1420" stroke-width="2.1" stroke-linecap="round"/>
<path d="M133.7 93.7 L133.9 93.9 L134.0 94.1 L134.1 94.5 L134.0 94.9 L133.8 95.3 L133.4 95.6 L133.0 95.8 L132.4 95.9 L131.8 95.7 L131.2 95.4 L130.8 94.9 L130.4 94.2 L130.3 93.5 L130.5 92.6 L130.9 91.9 L131.5 91.2 L132.3 90.7 L133.3 90.5 L134.4 90.6 L135.4 91.0 L136.2 91.8 L136.9 92.7 L137.2 93.9 L137.2 95.2 L136.8 96.4 L136.1 97.5 L135.0 98.4 L133.7 99.0" fill="none" stroke="#2b1420" stroke-width="2.1" stroke-linecap="round"/>
<path d="M145.7 94.7 L145.5 94.9 L145.2 95.0 L144.9 95.0 L144.5 94.9 L144.1 94.6 L143.9 94.2 L143.7 93.7 L143.7 93.2 L143.9 92.6 L144.3 92.1 L144.9 91.7 L145.6 91.4 L146.4 91.4 L147.2 91.7 L147.9 92.2 L148.5 92.9 L148.8 93.8 L148.9 94.8 L148.7 95.8 L148.1 96.7 L147.3 97.5 L146.3 98.0 L145.0 98.2 L143.8 98.0 L142.6 97.5 L141.6 96.6 L140.9 95.4 L140.5 94.0" fill="none" stroke="#2b1420" stroke-width="2.1" stroke-linecap="round"/>
<path d="M232.3 94.1 L232.1 93.9 L232.0 93.6 L232.1 93.2 L232.2 92.9 L232.6 92.6 L233.0 92.3 L233.5 92.3 L234.1 92.3 L234.6 92.6 L235.1 93.1 L235.4 93.7 L235.5 94.4 L235.4 95.2 L235.1 96.0 L234.5 96.6 L233.7 97.1 L232.8 97.3 L231.8 97.3 L230.8 96.9 L230.0 96.3 L229.3 95.3 L228.9 94.2 L228.9 93.0 L229.2 91.8 L229.9 90.7 L230.9 89.8 L232.2 89.2 L233.6 89.0" fill="none" stroke="#2b1420" stroke-width="2.1" stroke-linecap="round"/>
<path d="M245.5 93.3 L245.7 93.1 L246.0 93.1 L246.4 93.2 L246.7 93.4 L247.0 93.7 L247.1 94.2 L247.2 94.7 L247.0 95.3 L246.7 95.8 L246.1 96.2 L245.5 96.4 L244.7 96.5 L244.0 96.3 L243.3 95.8 L242.7 95.2 L242.3 94.3 L242.2 93.4 L242.4 92.4 L242.9 91.5 L243.7 90.7 L244.6 90.2 L245.8 89.9 L247.0 90.0 L248.2 90.5 L249.2 91.4 L249.9 92.5 L250.3 93.8 L250.3 95.3" fill="none" stroke="#2b1420" stroke-width="2.1" stroke-linecap="round"/>
<path d="M283.7 94.1 L283.8 94.3 L283.8 94.6 L283.7 95.0 L283.4 95.3 L283.1 95.5 L282.6 95.6 L282.1 95.6 L281.5 95.3 L281.1 94.9 L280.8 94.4 L280.6 93.7 L280.7 92.9 L281.0 92.2 L281.5 91.6 L282.2 91.1 L283.1 90.8 L284.0 90.8 L285.0 91.1 L285.8 91.7 L286.5 92.6 L286.9 93.7 L287.0 94.8 L286.7 96.0 L286.1 97.1 L285.2 98.0 L283.9 98.6 L282.6 98.8 L281.1 98.6" fill="none" stroke="#2b1420" stroke-width="2.1" stroke-linecap="round"/>
<path d="M320.4 94.7 L320.1 94.8 L319.8 94.7 L319.4 94.6 L319.2 94.3 L319.0 93.9 L319.0 93.4 L319.1 92.9 L319.4 92.4 L319.8 92.0 L320.4 91.7 L321.1 91.7 L321.9 91.8 L322.5 92.2 L323.1 92.8 L323.5 93.6 L323.6 94.5 L323.5 95.4 L323.1 96.3 L322.4 97.1 L321.4 97.7 L320.3 97.9 L319.2 97.9 L318.0 97.4 L317.0 96.7 L316.3 95.6 L315.8 94.3 L315.8 92.9 L316.1 91.6" fill="none" stroke="#2b1420" stroke-width="2.1" stroke-linecap="round"/>
<path d="M63.3 105.3 L63.3 105.0 L63.4 104.7 L63.6 104.4 L63.9 104.1 L64.3 104.0 L64.8 104.0 L65.3 104.2 L65.7 104.6 L66.1 105.1 L66.3 105.7 L66.2 106.4 L66.0 107.1 L65.5 107.8 L64.9 108.2 L64.0 108.5 L63.1 108.6 L62.2 108.3 L61.3 107.8 L60.7 107.0 L60.2 106.0 L60.1 104.8 L60.3 103.7 L60.9 102.6 L61.8 101.7 L62.9 101.1 L64.3 100.8 L65.7 100.9 L67.0 101.5" fill="none" stroke="#2b1420" stroke-width="2.1" stroke-linecap="round"/>
<path d="M89.3 104.8 L89.6 104.8 L89.9 105.0 L90.2 105.2 L90.4 105.6 L90.4 106.0 L90.3 106.5 L90.1 106.9 L89.7 107.3 L89.1 107.6 L88.5 107.7 L87.8 107.6 L87.1 107.3 L86.6 106.7 L86.2 106.0 L86.0 105.1 L86.1 104.2 L86.5 103.3 L87.1 102.6 L88.0 102.0 L89.0 101.7 L90.2 101.7 L91.3 102.1 L92.3 102.8 L93.1 103.8 L93.5 105.0 L93.6 106.4 L93.3 107.7 L92.6 109.0" fill="none" stroke="#2b1420" stroke-width="2.1" stroke-linecap="round"/>
<path d="M102.1 105.9 L102.1 106.2 L101.9 106.5 L101.6 106.7 L101.3 106.8 L100.8 106.8 L100.4 106.7 L99.9 106.4 L99.6 105.9 L99.4 105.4 L99.4 104.7 L99.6 104.0 L100.0 103.4 L100.6 102.9 L101.4 102.6 L102.2 102.6 L103.1 102.8 L104.0 103.3 L104.6 104.0 L105.1 104.9 L105.3 106.0 L105.1 107.1 L104.6 108.2 L103.8 109.1 L102.7 109.7 L101.4 110.0 L100.0 110.0 L98.7 109.5 L97.6 108.6" fill="none" stroke="#2b1420" stroke-width="2.1" stroke-linecap="round"/>
<path d="M176.0 106.1 L175.7 106.0 L175.5 105.8 L175.3 105.5 L175.2 105.1 L175.3 104.6 L175.5 104.2 L175.8 103.8 L176.3 103.5 L176.9 103.4 L177.6 103.5 L178.2 103.8 L178.8 104.3 L179.2 104.9 L179.4 105.7 L179.3 106.6 L179.0 107.5 L178.4 108.2 L177.6 108.8 L176.6 109.1 L175.5 109.2 L174.4 108.8 L173.4 108.2 L172.6 107.3 L172.1 106.1 L172.0 104.8 L172.3 103.5 L172.9 102.2 L173.9 101.2" fill="none" stroke="#2b1420" stroke-width="2.1" stroke-linecap="round"/>
<path d="M188.5 104.9 L188.6 104.7 L188.8 104.5 L189.2 104.3 L189.6 104.3 L190.0 104.4 L190.4 104.6 L190.8 105.0 L191.0 105.6 L191.0 106.2 L190.8 106.8 L190.5 107.4 L189.9 107.9 L189.2 108.2 L188.4 108.3 L187.5 108.1 L186.7 107.7 L186.0 107.0 L185.6 106.2 L185.4 105.1 L185.5 104.0 L186.0 103.0 L186.7 102.1 L187.7 101.4 L189.0 101.1 L190.3 101.1 L191.6 101.6 L192.7 102.4 L193.6 103.5" fill="none" stroke="#2b1420" stroke-width="2.1" stroke-linecap="round"/>
<path d="M202.1 105.1 L202.4 105.2 L202.6 105.5 L202.7 105.8 L202.6 106.2 L202.5 106.6 L202.2 107.0 L201.7 107.3 L201.2 107.4 L200.6 107.4 L200.0 107.2 L199.4 106.7 L199.0 106.1 L198.8 105.4 L198.8 104.5 L199.1 103.7 L199.6 103.0 L200.4 102.4 L201.3 102.0 L202.3 102.0 L203.4 102.2 L204.4 102.8 L205.2 103.7 L205.7 104.8 L205.9 106.0 L205.7 107.3 L205.1 108.5 L204.1 109.6 L202.9 110.3" fill="none" stroke="#2b1420" stroke-width="2.1" stroke-linecap="round"/>
<path d="M276.8 106.2 L276.7 106.4 L276.4 106.5 L276.0 106.6 L275.6 106.5 L275.2 106.3 L274.9 106.0 L274.7 105.5 L274.6 104.9 L274.7 104.3 L275.1 103.8 L275.6 103.3 L276.2 102.9 L277.0 102.8 L277.8 102.9 L278.6 103.3 L279.3 103.9 L279.7 104.8 L280.0 105.7 L279.9 106.8 L279.5 107.8 L278.8 108.7 L277.8 109.4 L276.7 109.7 L275.4 109.8 L274.2 109.4 L273.0 108.7 L272.1 107.6 L271.6 106.3" fill="none" stroke="#2b1420" stroke-width="2.1" stroke-linecap="round"/>
<path d="M288.3 105.7 L288.1 105.5 L288.0 105.2 L288.0 104.9 L288.1 104.5 L288.3 104.1 L288.7 103.9 L289.2 103.7 L289.8 103.7 L290.4 103.9 L290.9 104.3 L291.3 104.8 L291.6 105.5 L291.6 106.3 L291.4 107.1 L290.9 107.9 L290.2 108.4 L289.3 108.8 L288.3 108.9 L287.3 108.7 L286.3 108.2 L285.5 107.4 L285.0 106.3 L284.8 105.1 L284.9 103.9 L285.4 102.7 L286.3 101.6 L287.5 100.9 L288.9 100.5" fill="none" stroke="#2b1420" stroke-width="2.1" stroke-linecap="round"/>
<path d="M326.3 104.8 L326.6 104.6 L326.9 104.5 L327.2 104.6 L327.6 104.7 L327.9 105.0 L328.2 105.4 L328.3 106.0 L328.2 106.5 L327.9 107.1 L327.5 107.6 L326.8 107.9 L326.1 108.0 L325.3 108.0 L324.6 107.6 L323.9 107.1 L323.4 106.3 L323.2 105.4 L323.2 104.4 L323.5 103.4 L324.2 102.5 L325.1 101.8 L326.2 101.4 L327.4 101.4 L328.6 101.7 L329.8 102.3 L330.7 103.3 L331.3 104.6 L331.5 106.0" fill="none" stroke="#2b1420" stroke-width="2.1" stroke-linecap="round"/>
<path d="M83.7 116.9 L83.9 117.2 L83.9 117.5 L83.8 117.9 L83.6 118.2 L83.3 118.5 L82.8 118.7 L82.3 118.7 L81.8 118.5 L81.3 118.2 L80.8 117.7 L80.6 117.0 L80.5 116.3 L80.7 115.5 L81.1 114.8 L81.8 114.2 L82.6 113.8 L83.5 113.7 L84.5 113.9 L85.5 114.3 L86.3 115.1 L86.8 116.1 L87.1 117.2 L87.0 118.4 L86.5 119.6 L85.7 120.6 L84.6 121.4 L83.3 121.8 L81.8 121.9" fill="none" stroke="#2b1420" stroke-width="2.1" stroke-linecap="round"/>
<path d="M120.5 117.7 L120.2 117.9 L119.9 117.9 L119.5 117.7 L119.2 117.5 L119.0 117.1 L118.9 116.6 L118.9 116.1 L119.1 115.6 L119.5 115.1 L120.1 114.8 L120.8 114.6 L121.5 114.6 L122.3 114.9 L122.9 115.4 L123.4 116.1 L123.7 117.0 L123.7 118.0 L123.4 118.9 L122.8 119.8 L122.0 120.5 L120.9 120.9 L119.8 121.0 L118.6 120.8 L117.5 120.2 L116.5 119.2 L115.9 118.0 L115.7 116.7 L115.8 115.2" fill="none" stroke="#2b1420" stroke-width="2.1" stroke-linecap="round"/>
<path d="M169.8 116.9 L169.7 116.6 L169.7 116.3 L169.9 116.0 L170.2 115.7 L170.6 115.5 L171.1 115.4 L171.6 115.6 L172.1 115.8 L172.5 116.3 L172.8 116.9 L172.8 117.6 L172.7 118.3 L172.3 119.0 L171.8 119.6 L171.0 120.0 L170.1 120.2 L169.1 120.0 L168.2 119.6 L167.4 118.9 L166.9 118.0 L166.6 116.9 L166.6 115.7 L167.0 114.6 L167.8 113.6 L168.8 112.8 L170.1 112.3 L171.5 112.2 L172.9 112.6" fill="none" stroke="#2b1420" stroke-width="2.1" stroke-linecap="round"/>
<path d="M208.2 116.3 L208.5 116.3 L208.8 116.3 L209.1 116.5 L209.4 116.9 L209.5 117.3 L209.5 117.8 L209.3 118.3 L208.9 118.7 L208.4 119.1 L207.8 119.3 L207.1 119.3 L206.4 119.0 L205.8 118.6 L205.3 117.9 L205.0 117.1 L204.9 116.2 L205.2 115.3 L205.7 114.4 L206.5 113.7 L207.5 113.3 L208.6 113.1 L209.7 113.3 L210.8 113.8 L211.8 114.7 L212.4 115.9 L212.7 117.2 L212.6 118.6 L212.1 119.9" fill="none" stroke="#2b1420" stroke-width="2.1" stroke-linecap="round"/>
<path d="M258.7 117.3 L258.7 117.6 L258.6 117.9 L258.3 118.2 L258.0 118.4 L257.5 118.4 L257.0 118.4 L256.6 118.1 L256.2 117.7 L255.9 117.2 L255.8 116.5 L255.9 115.8 L256.2 115.2 L256.7 114.6 L257.4 114.2 L258.3 114.0 L259.2 114.1 L260.1 114.4 L260.9 115.0 L261.5 115.9 L261.8 116.9 L261.8 118.1 L261.4 119.2 L260.8 120.2 L259.8 121.0 L258.6 121.5 L257.2 121.6 L255.9 121.3 L254.6 120.7" fill="none" stroke="#2b1420" stroke-width="2.1" stroke-linecap="round"/>
<path d="M270.1 117.6 L269.8 117.6 L269.5 117.4 L269.3 117.2 L269.2 116.8 L269.1 116.3 L269.3 115.9 L269.6 115.4 L270.0 115.1 L270.6 114.9 L271.3 114.9 L271.9 115.0 L272.6 115.4 L273.1 116.1 L273.4 116.8 L273.4 117.7 L273.3 118.6 L272.8 119.4 L272.1 120.1 L271.1 120.6 L270.1 120.8 L268.9 120.6 L267.9 120.1 L267.0 119.3 L266.3 118.2 L266.0 117.0 L266.0 115.6 L266.5 114.3 L267.3 113.2" fill="none" stroke="#2b1420" stroke-width="2.1" stroke-linecap="round"/>
<path d="M294.9 116.5 L295.0 116.2 L295.2 116.0 L295.5 115.8 L295.9 115.7 L296.3 115.7 L296.8 115.9 L297.2 116.3 L297.5 116.8 L297.6 117.4 L297.5 118.0 L297.3 118.7 L296.8 119.2 L296.1 119.7 L295.3 119.9 L294.4 119.8 L293.6 119.5 L292.8 119.0 L292.2 118.2 L291.9 117.2 L291.8 116.1 L292.1 115.0 L292.7 114.0 L293.7 113.2 L294.8 112.7 L296.1 112.5 L297.4 112.7 L298.7 113.3 L299.7 114.3" fill="none" stroke="#2b1420" stroke-width="2.1" stroke-linecap="round"/>
<path d="M89.5 128.0 L89.8 128.1 L90.0 128.3 L90.2 128.7 L90.2 129.1 L90.1 129.5 L89.9 129.9 L89.5 130.2 L89.0 130.5 L88.4 130.5 L87.7 130.4 L87.1 130.0 L86.6 129.5 L86.3 128.8 L86.2 127.9 L86.3 127.1 L86.7 126.3 L87.4 125.6 L88.3 125.1 L89.3 124.9 L90.4 125.0 L91.4 125.4 L92.3 126.1 L93.0 127.2 L93.4 128.4 L93.4 129.7 L93.0 131.0 L92.2 132.1 L91.1 133.0" fill="none" stroke="#2b1420" stroke-width="2.1" stroke-linecap="round"/>
<path d="M114.4 129.1 L114.3 129.4 L114.0 129.6 L113.7 129.7 L113.3 129.7 L112.9 129.5 L112.5 129.2 L112.2 128.8 L112.1 128.2 L112.1 127.6 L112.3 127.0 L112.7 126.4 L113.3 126.0 L114.1 125.8 L114.9 125.8 L115.7 126.0 L116.5 126.5 L117.1 127.3 L117.5 128.2 L117.6 129.3 L117.3 130.3 L116.8 131.3 L115.9 132.1 L114.8 132.7 L113.6 132.9 L112.3 132.7 L111.0 132.1 L110.0 131.2 L109.2 130.0" fill="none" stroke="#2b1420" stroke-width="2.1" stroke-linecap="round"/>
<path d="M175.8 128.9 L175.6 128.7 L175.5 128.4 L175.4 128.0 L175.4 127.6 L175.6 127.3 L176.0 126.9 L176.5 126.7 L177.0 126.6 L177.6 126.7 L178.2 127.0 L178.7 127.5 L179.0 128.2 L179.2 128.9 L179.1 129.8 L178.7 130.6 L178.1 131.2 L177.3 131.7 L176.3 132.0 L175.3 131.9 L174.3 131.6 L173.4 130.9 L172.7 129.9 L172.3 128.8 L172.2 127.5 L172.6 126.2 L173.3 125.1 L174.3 124.2 L175.6 123.6" fill="none" stroke="#2b1420" stroke-width="2.1" stroke-linecap="round"/>
<path d="M201.2 127.8 L201.4 127.6 L201.7 127.5 L202.1 127.5 L202.5 127.6 L202.8 127.8 L203.1 128.2 L203.3 128.7 L203.3 129.3 L203.1 129.9 L202.8 130.4 L202.2 130.8 L201.5 131.1 L200.7 131.1 L199.9 130.9 L199.2 130.4 L198.6 129.8 L198.2 128.9 L198.1 127.9 L198.3 126.9 L198.8 125.9 L199.6 125.1 L200.6 124.5 L201.8 124.3 L203.0 124.4 L204.2 124.9 L205.3 125.7 L206.1 126.9 L206.5 128.3" fill="none" stroke="#2b1420" stroke-width="2.1" stroke-linecap="round"/>
<path d="M264.7 128.3 L264.9 128.6 L265.0 128.9 L265.0 129.2 L264.8 129.6 L264.5 129.9 L264.1 130.2 L263.6 130.3 L263.0 130.2 L262.4 129.9 L262.0 129.5 L261.6 128.9 L261.4 128.2 L261.5 127.4 L261.8 126.6 L262.4 125.9 L263.1 125.4 L264.1 125.2 L265.1 125.2 L266.0 125.5 L266.9 126.1 L267.6 127.0 L268.1 128.1 L268.2 129.3 L267.9 130.6 L267.2 131.7 L266.3 132.6 L265.0 133.2 L263.6 133.5" fill="none" stroke="#2b1420" stroke-width="2.1" stroke-linecap="round"/>
<path d="M301.6 129.2 L301.3 129.4 L301.0 129.4 L300.7 129.4 L300.3 129.2 L300.0 128.8 L299.8 128.4 L299.8 127.8 L299.9 127.3 L300.3 126.8 L300.8 126.4 L301.4 126.1 L302.2 126.0 L302.9 126.2 L303.6 126.6 L304.2 127.2 L304.6 128.0 L304.8 129.0 L304.7 130.0 L304.2 130.9 L303.5 131.7 L302.5 132.3 L301.4 132.6 L300.1 132.5 L299.0 132.1 L297.9 131.3 L297.1 130.2 L296.7 128.9 L296.6 127.4" fill="none" stroke="#2b1420" stroke-width="2.1" stroke-linecap="round"/>
<path d="M57.3 140.0 L57.1 139.7 L57.1 139.4 L57.3 139.1 L57.5 138.7 L57.9 138.5 L58.3 138.4 L58.9 138.4 L59.4 138.6 L59.9 139.0 L60.2 139.6 L60.4 140.2 L60.4 141.0 L60.1 141.7 L59.6 142.4 L58.9 142.9 L58.1 143.2 L57.1 143.2 L56.1 142.9 L55.3 142.4 L54.5 141.5 L54.1 140.5 L54.0 139.3 L54.2 138.1 L54.8 137.0 L55.7 136.1 L56.9 135.4 L58.2 135.2 L59.7 135.3" fill="none" stroke="#2b1420" stroke-width="2.1" stroke-linecap="round"/>
<path d="M95.6 139.3 L95.9 139.2 L96.2 139.2 L96.5 139.4 L96.8 139.7 L97.0 140.1 L97.1 140.5 L97.0 141.1 L96.7 141.6 L96.2 142.0 L95.7 142.3 L95.0 142.4 L94.2 142.2 L93.5 141.9 L92.9 141.3 L92.5 140.5 L92.3 139.6 L92.4 138.7 L92.8 137.8 L93.5 137.0 L94.4 136.4 L95.5 136.1 L96.7 136.1 L97.8 136.5 L98.9 137.2 L99.7 138.2 L100.2 139.5 L100.3 140.9 L100.0 142.3" fill="none" stroke="#2b1420" stroke-width="2.1" stroke-linecap="round"/>
<path d="M108.7 140.2 L108.8 140.5 L108.7 140.8 L108.5 141.1 L108.2 141.3 L107.7 141.5 L107.3 141.5 L106.8 141.3 L106.3 141.0 L105.9 140.5 L105.7 139.9 L105.7 139.2 L105.9 138.5 L106.4 137.8 L107.0 137.3 L107.8 137.0 L108.8 136.9 L109.7 137.1 L110.6 137.6 L111.3 138.4 L111.7 139.4 L111.9 140.5 L111.7 141.7 L111.2 142.8 L110.4 143.7 L109.2 144.4 L107.9 144.7 L106.5 144.6 L105.2 144.1" fill="none" stroke="#2b1420" stroke-width="2.1" stroke-linecap="round"/>
<path d="M145.2 140.7 L144.9 140.7 L144.6 140.6 L144.3 140.3 L144.1 140.0 L144.1 139.5 L144.1 139.1 L144.4 138.6 L144.7 138.2 L145.3 137.9 L145.9 137.8 L146.6 137.9 L147.3 138.2 L147.9 138.7 L148.3 139.4 L148.5 140.2 L148.5 141.1 L148.1 142.0 L147.5 142.8 L146.7 143.4 L145.6 143.8 L144.5 143.8 L143.4 143.5 L142.3 142.8 L141.5 141.9 L141.0 140.7 L140.9 139.3 L141.1 137.9 L141.8 136.7" fill="none" stroke="#2b1420" stroke-width="2.1" stroke-linecap="round"/>
<path d="M182.4 139.6 L182.4 139.3 L182.5 139.0 L182.8 138.8 L183.2 138.7 L183.6 138.6 L184.1 138.8 L184.5 139.0 L184.9 139.5 L185.1 140.1 L185.2 140.7 L185.0 141.4 L184.6 142.0 L184.0 142.5 L183.2 142.9 L182.4 143.0 L181.5 142.8 L180.6 142.3 L179.9 141.6 L179.4 140.7 L179.2 139.6 L179.4 138.5 L179.8 137.4 L180.6 136.5 L181.7 135.8 L182.9 135.5 L184.3 135.5 L185.6 135.9 L186.8 136.7" fill="none" stroke="#2b1420" stroke-width="2.1" stroke-linecap="round"/>
<path d="M196.0 139.4 L196.2 139.5 L196.5 139.7 L196.7 140.0 L196.8 140.4 L196.8 140.8 L196.6 141.3 L196.2 141.7 L195.8 141.9 L195.2 142.1 L194.5 142.0 L193.9 141.8 L193.3 141.3 L192.9 140.7 L192.6 139.9 L192.6 139.0 L192.9 138.1 L193.5 137.3 L194.3 136.7 L195.3 136.4 L196.3 136.3 L197.4 136.6 L198.5 137.2 L199.3 138.1 L199.8 139.2 L200.0 140.5 L199.8 141.8 L199.2 143.1 L198.3 144.2" fill="none" stroke="#2b1420" stroke-width="2.1" stroke-linecap="round"/>
<path d="M233.5 140.5 L233.4 140.8 L233.2 141.0 L232.9 141.2 L232.5 141.3 L232.0 141.2 L231.6 140.9 L231.3 140.5 L231.0 140.0 L231.0 139.4 L231.1 138.8 L231.4 138.2 L232.0 137.6 L232.7 137.3 L233.5 137.2 L234.4 137.3 L235.2 137.7 L235.9 138.3 L236.4 139.2 L236.6 140.2 L236.6 141.3 L236.1 142.4 L235.4 143.3 L234.4 144.0 L233.2 144.4 L231.9 144.4 L230.6 144.0 L229.4 143.3 L228.5 142.2" fill="none" stroke="#2b1420" stroke-width="2.1" stroke-linecap="round"/>
<path d="M269.9 140.4 L269.7 140.3 L269.4 140.1 L269.3 139.7 L269.3 139.3 L269.5 138.9 L269.8 138.5 L270.2 138.2 L270.7 138.1 L271.4 138.1 L272.0 138.3 L272.5 138.7 L273.0 139.3 L273.2 140.0 L273.2 140.9 L273.0 141.7 L272.5 142.5 L271.8 143.1 L270.8 143.5 L269.8 143.6 L268.7 143.4 L267.7 142.8 L266.9 142.0 L266.4 140.9 L266.1 139.7 L266.3 138.4 L266.8 137.1 L267.7 136.0 L268.9 135.3" fill="none" stroke="#2b1420" stroke-width="2.1" stroke-linecap="round"/>
<path d="M282.6 139.3 L282.8 139.1 L283.1 138.9 L283.4 138.9 L283.8 138.9 L284.2 139.1 L284.6 139.5 L284.8 139.9 L284.9 140.5 L284.8 141.1 L284.5 141.7 L284.0 142.2 L283.4 142.5 L282.6 142.7 L281.8 142.6 L281.0 142.3 L280.3 141.7 L279.8 140.9 L279.5 139.9 L279.6 138.9 L279.9 137.8 L280.6 136.9 L281.5 136.2 L282.6 135.8 L283.9 135.7 L285.2 136.0 L286.3 136.7 L287.3 137.7 L287.9 139.0" fill="none" stroke="#2b1420" stroke-width="2.1" stroke-linecap="round"/>
<path d="M321.2 139.7 L321.4 139.9 L321.5 140.2 L321.6 140.6 L321.5 141.0 L321.2 141.3 L320.8 141.6 L320.3 141.8 L319.8 141.8 L319.2 141.7 L318.6 141.3 L318.2 140.7 L317.9 140.1 L317.9 139.3 L318.1 138.5 L318.5 137.7 L319.2 137.1 L320.1 136.7 L321.0 136.6 L322.1 136.7 L323.1 137.2 L323.9 138.0 L324.5 139.0 L324.7 140.2 L324.6 141.5 L324.2 142.7 L323.3 143.7 L322.2 144.5 L320.8 145.0" fill="none" stroke="#2b1420" stroke-width="2.1" stroke-linecap="round"/>
<path d="M64.2 152.2 L64.0 152.4 L63.7 152.5 L63.3 152.5 L62.9 152.3 L62.6 152.0 L62.3 151.6 L62.2 151.1 L62.3 150.5 L62.5 150.0 L63.0 149.5 L63.6 149.1 L64.3 148.9 L65.1 149.0 L65.8 149.3 L66.5 149.8 L67.0 150.6 L67.3 151.5 L67.3 152.5 L67.0 153.5 L66.4 154.4 L65.6 155.1 L64.5 155.6 L63.3 155.7 L62.0 155.4 L60.9 154.8 L59.9 153.8 L59.3 152.6 L59.0 151.2" fill="none" stroke="#2b1420" stroke-width="2.1" stroke-linecap="round"/>
<path d="M138.3 151.6 L138.1 151.3 L138.1 151.0 L138.1 150.7 L138.3 150.3 L138.6 150.0 L139.1 149.8 L139.6 149.8 L140.2 149.9 L140.7 150.2 L141.1 150.7 L141.4 151.4 L141.5 152.1 L141.4 152.9 L141.0 153.6 L140.3 154.2 L139.5 154.6 L138.6 154.8 L137.6 154.7 L136.6 154.3 L135.8 153.5 L135.2 152.6 L134.9 151.4 L135.0 150.2 L135.4 149.0 L136.1 148.0 L137.2 147.2 L138.5 146.7 L140.0 146.6" fill="none" stroke="#2b1420" stroke-width="2.1" stroke-linecap="round"/>
<path d="M151.5 150.8 L151.8 150.6 L152.1 150.6 L152.4 150.7 L152.8 151.0 L153.0 151.3 L153.1 151.8 L153.1 152.3 L152.9 152.9 L152.5 153.3 L152.0 153.7 L151.3 153.9 L150.6 153.9 L149.8 153.7 L149.2 153.2 L148.6 152.5 L148.3 151.6 L148.3 150.7 L148.5 149.7 L149.1 148.8 L149.9 148.1 L150.9 147.6 L152.1 147.5 L153.3 147.7 L154.4 148.2 L155.4 149.1 L156.0 150.3 L156.3 151.6 L156.2 153.1" fill="none" stroke="#2b1420" stroke-width="2.1" stroke-linecap="round"/>
<path d="M189.7 151.6 L189.8 151.9 L189.8 152.2 L189.6 152.5 L189.4 152.8 L189.0 153.0 L188.5 153.1 L188.0 153.0 L187.5 152.7 L187.0 152.3 L186.7 151.7 L186.6 151.0 L186.7 150.3 L187.1 149.6 L187.6 149.0 L188.4 148.5 L189.3 148.3 L190.2 148.4 L191.2 148.8 L192.0 149.4 L192.6 150.3 L192.9 151.4 L192.9 152.6 L192.6 153.8 L191.9 154.8 L190.9 155.6 L189.6 156.2 L188.2 156.3 L186.8 156.0" fill="none" stroke="#2b1420" stroke-width="2.1" stroke-linecap="round"/>
<path d="M226.3 152.2 L226.0 152.3 L225.7 152.2 L225.4 152.0 L225.2 151.7 L225.0 151.3 L225.0 150.8 L225.2 150.3 L225.5 149.8 L226.0 149.5 L226.6 149.2 L227.3 149.2 L228.0 149.4 L228.7 149.8 L229.2 150.5 L229.5 151.3 L229.6 152.2 L229.4 153.1 L228.9 154.0 L228.2 154.7 L227.2 155.2 L226.1 155.4 L224.9 155.3 L223.8 154.8 L222.8 153.9 L222.2 152.8 L221.8 151.5 L221.9 150.1 L222.3 148.8" fill="none" stroke="#2b1420" stroke-width="2.1" stroke-linecap="round"/>
<path d="M238.3 151.2 L238.3 150.9 L238.4 150.6 L238.6 150.3 L239.0 150.1 L239.4 150.1 L239.9 150.1 L240.4 150.3 L240.8 150.7 L241.1 151.2 L241.2 151.9 L241.2 152.6 L240.9 153.3 L240.4 153.9 L239.7 154.3 L238.8 154.5 L237.9 154.5 L237.0 154.2 L236.2 153.6 L235.6 152.7 L235.2 151.7 L235.2 150.6 L235.5 149.4 L236.1 148.4 L237.1 147.6 L238.2 147.0 L239.6 146.8 L241.0 147.1 L242.3 147.7" fill="none" stroke="#2b1420" stroke-width="2.1" stroke-linecap="round"/>
<path d="M314.4 150.9 L314.7 150.9 L314.9 151.0 L315.2 151.3 L315.3 151.7 L315.4 152.1 L315.3 152.6 L315.0 153.0 L314.6 153.4 L314.0 153.6 L313.3 153.7 L312.7 153.5 L312.0 153.1 L311.5 152.6 L311.1 151.8 L311.0 150.9 L311.2 150.0 L311.6 149.2 L312.3 148.5 L313.2 148.0 L314.3 147.7 L315.4 147.8 L316.5 148.3 L317.5 149.0 L318.2 150.1 L318.5 151.3 L318.5 152.7 L318.1 154.0 L317.3 155.2" fill="none" stroke="#2b1420" stroke-width="2.1" stroke-linecap="round"/>
<path d="M327.1 152.0 L327.0 152.2 L326.8 152.5 L326.6 152.7 L326.2 152.8 L325.7 152.8 L325.3 152.6 L324.9 152.3 L324.6 151.8 L324.4 151.2 L324.4 150.6 L324.7 149.9 L325.1 149.3 L325.8 148.9 L326.6 148.6 L327.4 148.6 L328.3 148.9 L329.1 149.4 L329.7 150.2 L330.1 151.2 L330.2 152.3 L330.0 153.4 L329.4 154.4 L328.5 155.2 L327.4 155.8 L326.1 156.0 L324.7 155.9 L323.5 155.3 L322.4 154.3" fill="none" stroke="#2b1420" stroke-width="2.1" stroke-linecap="round"/>
<path d="M57.5 163.5 L57.2 163.4 L57.0 163.2 L56.8 162.9 L56.7 162.5 L56.8 162.1 L57.1 161.6 L57.4 161.3 L57.9 161.0 L58.6 161.0 L59.2 161.1 L59.8 161.4 L60.3 161.9 L60.7 162.6 L60.8 163.4 L60.7 164.3 L60.4 165.1 L59.7 165.9 L58.9 166.4 L57.8 166.6 L56.8 166.6 L55.7 166.2 L54.8 165.5 L54.0 164.5 L53.6 163.3 L53.6 162.0 L53.9 160.7 L54.6 159.5 L55.7 158.6" fill="none" stroke="#2b1420" stroke-width="2.1" stroke-linecap="round"/>
<path d="M70.0 162.4 L70.2 162.2 L70.4 161.9 L70.8 161.8 L71.2 161.8 L71.6 161.9 L72.0 162.2 L72.3 162.7 L72.5 163.2 L72.5 163.8 L72.3 164.4 L71.9 165.0 L71.3 165.5 L70.5 165.7 L69.7 165.8 L68.9 165.5 L68.1 165.1 L67.4 164.3 L67.0 163.4 L66.9 162.4 L67.1 161.3 L67.6 160.3 L68.5 159.5 L69.5 158.9 L70.8 158.6 L72.1 158.7 L73.3 159.2 L74.4 160.1 L75.2 161.3" fill="none" stroke="#2b1420" stroke-width="2.1" stroke-linecap="round"/>
<path d="M83.6 162.6 L83.9 162.8 L84.1 163.1 L84.1 163.4 L84.1 163.8 L83.9 164.2 L83.6 164.6 L83.1 164.8 L82.5 164.9 L81.9 164.8 L81.3 164.6 L80.8 164.1 L80.5 163.4 L80.3 162.7 L80.4 161.8 L80.7 161.0 L81.3 160.3 L82.1 159.8 L83.0 159.5 L84.1 159.5 L85.1 159.9 L86.0 160.5 L86.8 161.4 L87.2 162.6 L87.3 163.8 L87.0 165.1 L86.4 166.3 L85.4 167.2 L84.1 167.9" fill="none" stroke="#2b1420" stroke-width="2.1" stroke-linecap="round"/>
<path d="M120.8 163.7 L120.6 163.9 L120.3 164.0 L119.9 164.1 L119.6 164.0 L119.2 163.7 L118.9 163.4 L118.7 162.9 L118.7 162.3 L118.8 161.7 L119.2 161.2 L119.7 160.7 L120.4 160.4 L121.2 160.4 L122.0 160.5 L122.7 161.0 L123.4 161.6 L123.8 162.5 L123.9 163.5 L123.8 164.5 L123.3 165.5 L122.6 166.3 L121.6 166.9 L120.4 167.2 L119.1 167.2 L117.9 166.7 L116.8 165.9 L116.0 164.8 L115.5 163.4" fill="none" stroke="#2b1420" stroke-width="2.1" stroke-linecap="round"/>
<path d="M132.3 163.2 L132.1 163.0 L132.0 162.7 L132.0 162.3 L132.2 161.9 L132.4 161.6 L132.8 161.3 L133.4 161.2 L133.9 161.3 L134.5 161.5 L135.0 161.9 L135.4 162.5 L135.6 163.2 L135.5 164.0 L135.3 164.8 L134.7 165.5 L134.0 166.0 L133.1 166.3 L132.1 166.4 L131.1 166.1 L130.2 165.5 L129.4 164.6 L128.9 163.6 L128.8 162.3 L129.0 161.1 L129.6 159.9 L130.6 159.0 L131.8 158.3 L133.2 158.0" fill="none" stroke="#2b1420" stroke-width="2.1" stroke-linecap="round"/>
<path d="M145.4 162.3 L145.6 162.1 L145.9 162.0 L146.3 162.1 L146.7 162.3 L147.0 162.6 L147.2 163.1 L147.2 163.6 L147.1 164.1 L146.8 164.7 L146.3 165.1 L145.7 165.4 L144.9 165.5 L144.2 165.4 L143.4 165.0 L142.8 164.4 L142.4 163.6 L142.2 162.7 L142.3 161.7 L142.7 160.7 L143.4 159.9 L144.3 159.2 L145.5 158.9 L146.7 158.9 L147.9 159.3 L149.0 160.1 L149.8 161.1 L150.3 162.4 L150.4 163.9" fill="none" stroke="#2b1420" stroke-width="2.1" stroke-linecap="round"/>
<path d="M158.7 163.0 L158.9 163.2 L158.9 163.6 L158.8 163.9 L158.5 164.2 L158.2 164.5 L157.7 164.6 L157.2 164.6 L156.7 164.4 L156.2 164.1 L155.8 163.5 L155.6 162.9 L155.6 162.1 L155.8 161.4 L156.3 160.7 L157.0 160.2 L157.8 159.8 L158.8 159.8 L159.7 160.0 L160.6 160.5 L161.4 161.3 L161.9 162.3 L162.1 163.5 L161.9 164.7 L161.3 165.8 L160.5 166.8 L159.3 167.5 L158.0 167.8 L156.5 167.8" fill="none" stroke="#2b1420" stroke-width="2.1" stroke-linecap="round"/>
<path d="M170.4 163.7 L170.1 163.8 L169.8 163.8 L169.5 163.7 L169.2 163.4 L169.0 163.0 L168.9 162.5 L169.0 162.0 L169.2 161.5 L169.7 161.1 L170.3 160.7 L170.9 160.6 L171.7 160.7 L172.4 161.0 L173.0 161.6 L173.5 162.3 L173.7 163.2 L173.6 164.2 L173.3 165.1 L172.6 165.9 L171.7 166.6 L170.7 166.9 L169.5 167.0 L168.3 166.6 L167.2 166.0 L166.4 165.0 L165.9 163.7 L165.7 162.3 L166.0 160.9" fill="none" stroke="#2b1420" stroke-width="2.1" stroke-linecap="round"/>
<path d="M219.8 162.8 L219.7 162.5 L219.8 162.2 L220.0 161.9 L220.3 161.7 L220.7 161.5 L221.2 161.5 L221.7 161.6 L222.2 162.0 L222.5 162.4 L222.8 163.0 L222.8 163.7 L222.6 164.5 L222.2 165.1 L221.6 165.7 L220.8 166.0 L219.9 166.1 L218.9 165.9 L218.0 165.5 L217.3 164.7 L216.8 163.8 L216.6 162.7 L216.7 161.5 L217.2 160.4 L218.0 159.4 L219.1 158.7 L220.4 158.3 L221.8 158.3 L223.2 158.8" fill="none" stroke="#2b1420" stroke-width="2.1" stroke-linecap="round"/>
<path d="M233.3 162.3 L233.6 162.3 L233.9 162.4 L234.1 162.6 L234.4 163.0 L234.5 163.4 L234.4 163.9 L234.2 164.4 L233.8 164.8 L233.3 165.1 L232.7 165.2 L232.0 165.2 L231.3 164.9 L230.7 164.4 L230.2 163.7 L230.0 162.9 L230.0 162.0 L230.3 161.1 L230.9 160.2 L231.7 159.6 L232.7 159.2 L233.8 159.2 L235.0 159.4 L236.0 160.0 L236.9 161.0 L237.5 162.2 L237.7 163.5 L237.5 164.9 L236.9 166.2" fill="none" stroke="#2b1420" stroke-width="2.1" stroke-linecap="round"/>
<path d="M246.2 163.4 L246.1 163.6 L246.0 163.9 L245.7 164.2 L245.4 164.4 L244.9 164.4 L244.5 164.3 L244.0 164.0 L243.6 163.6 L243.4 163.0 L243.3 162.4 L243.5 161.7 L243.8 161.0 L244.4 160.5 L245.1 160.1 L246.0 160.0 L246.9 160.1 L247.8 160.6 L248.5 161.2 L249.0 162.1 L249.3 163.2 L249.2 164.3 L248.8 165.4 L248.0 166.4 L247.0 167.1 L245.8 167.5 L244.4 167.6 L243.1 167.2 L241.9 166.4" fill="none" stroke="#2b1420" stroke-width="2.1" stroke-linecap="round"/>
<path d="M257.6 163.6 L257.3 163.5 L257.0 163.4 L256.8 163.1 L256.7 162.7 L256.7 162.2 L256.9 161.8 L257.2 161.4 L257.7 161.1 L258.2 160.9 L258.9 160.9 L259.6 161.1 L260.2 161.6 L260.6 162.2 L260.9 163.0 L260.9 163.9 L260.6 164.8 L260.1 165.6 L259.4 166.2 L258.4 166.6 L257.3 166.7 L256.2 166.5 L255.2 165.9 L254.3 165.1 L253.7 164.0 L253.5 162.7 L253.6 161.3 L254.2 160.0 L255.1 158.9" fill="none" stroke="#2b1420" stroke-width="2.1" stroke-linecap="round"/>
<path d="M307.5 162.5 L307.6 162.2 L307.8 162.0 L308.1 161.8 L308.5 161.7 L308.9 161.8 L309.3 162.0 L309.7 162.4 L310.0 162.9 L310.1 163.5 L309.9 164.2 L309.6 164.8 L309.1 165.3 L308.4 165.7 L307.6 165.8 L306.8 165.8 L305.9 165.4 L305.2 164.8 L304.6 163.9 L304.4 162.9 L304.4 161.8 L304.8 160.8 L305.4 159.8 L306.4 159.1 L307.6 158.6 L308.9 158.5 L310.2 158.9 L311.4 159.6 L312.4 160.6" fill="none" stroke="#2b1420" stroke-width="2.1" stroke-linecap="round"/>
<path d="M321.1 162.5 L321.3 162.7 L321.5 162.9 L321.7 163.2 L321.7 163.6 L321.6 164.1 L321.3 164.5 L320.9 164.8 L320.3 165.0 L319.7 165.0 L319.1 164.8 L318.5 164.4 L318.1 163.8 L317.8 163.1 L317.7 162.3 L317.9 161.4 L318.4 160.6 L319.1 160.0 L320.0 159.6 L321.0 159.4 L322.1 159.6 L323.1 160.1 L324.0 160.9 L324.6 161.9 L324.9 163.2 L324.8 164.5 L324.3 165.7 L323.5 166.8 L322.3 167.7" fill="none" stroke="#2b1420" stroke-width="2.1" stroke-linecap="round"/>
<path d="M64.4 175.1 L64.2 175.4 L64.0 175.6 L63.6 175.6 L63.2 175.6 L62.8 175.4 L62.5 175.1 L62.2 174.6 L62.1 174.1 L62.1 173.5 L62.4 172.9 L62.9 172.4 L63.5 172.0 L64.3 171.8 L65.1 171.8 L65.9 172.2 L66.6 172.7 L67.2 173.5 L67.5 174.5 L67.5 175.5 L67.2 176.5 L66.6 177.5 L65.7 178.2 L64.5 178.7 L63.3 178.8 L62.0 178.6 L60.8 177.9 L59.8 176.9 L59.1 175.7" fill="none" stroke="#2b1420" stroke-width="2.1" stroke-linecap="round"/>
<path d="M75.8 174.8 L75.6 174.6 L75.5 174.3 L75.4 174.0 L75.5 173.6 L75.7 173.2 L76.1 172.9 L76.6 172.7 L77.2 172.6 L77.8 172.8 L78.3 173.1 L78.8 173.7 L79.1 174.3 L79.2 175.1 L79.0 175.9 L78.6 176.7 L77.9 177.3 L77.1 177.8 L76.1 178.0 L75.1 177.8 L74.1 177.4 L73.2 176.7 L72.6 175.7 L72.3 174.5 L72.3 173.2 L72.7 172.0 L73.5 170.9 L74.6 170.0 L76.0 169.5" fill="none" stroke="#2b1420" stroke-width="2.1" stroke-linecap="round"/>
<path d="M88.8 173.8 L89.0 173.6 L89.3 173.5 L89.7 173.5 L90.0 173.6 L90.4 173.9 L90.7 174.3 L90.8 174.8 L90.8 175.4 L90.5 176.0 L90.1 176.5 L89.5 176.9 L88.8 177.1 L88.0 177.0 L87.3 176.8 L86.6 176.3 L86.0 175.6 L85.7 174.7 L85.6 173.7 L85.9 172.6 L86.4 171.7 L87.3 171.0 L88.4 170.5 L89.6 170.3 L90.8 170.5 L92.0 171.1 L93.0 172.0 L93.7 173.2 L94.0 174.6" fill="none" stroke="#2b1420" stroke-width="2.1" stroke-linecap="round"/>
<path d="M114.7 174.4 L114.9 174.6 L115.0 174.9 L114.9 175.3 L114.7 175.6 L114.4 176.0 L114.0 176.2 L113.4 176.2 L112.9 176.1 L112.4 175.8 L111.9 175.4 L111.6 174.7 L111.5 174.0 L111.6 173.2 L112.0 172.5 L112.6 171.8 L113.3 171.4 L114.3 171.2 L115.3 171.3 L116.2 171.6 L117.1 172.3 L117.7 173.3 L118.1 174.4 L118.1 175.6 L117.7 176.8 L117.0 177.9 L116.0 178.8 L114.7 179.3 L113.2 179.4" fill="none" stroke="#2b1420" stroke-width="2.1" stroke-linecap="round"/>
<path d="M126.5 175.2 L126.3 175.4 L125.9 175.4 L125.6 175.3 L125.3 175.1 L125.0 174.7 L124.9 174.3 L124.9 173.7 L125.0 173.2 L125.4 172.7 L125.9 172.3 L126.6 172.1 L127.3 172.1 L128.1 172.3 L128.8 172.7 L129.3 173.4 L129.7 174.3 L129.8 175.2 L129.5 176.2 L129.0 177.1 L128.3 177.9 L127.2 178.4 L126.1 178.6 L124.9 178.4 L123.7 177.9 L122.7 177.0 L122.0 175.9 L121.7 174.6 L121.7 173.1" fill="none" stroke="#2b1420" stroke-width="2.1" stroke-linecap="round"/>
<path d="M138.3 174.4 L138.2 174.2 L138.2 173.8 L138.3 173.5 L138.6 173.2 L139.0 173.0 L139.5 172.9 L140.0 173.0 L140.5 173.2 L140.9 173.6 L141.2 174.2 L141.4 174.9 L141.3 175.6 L141.0 176.3 L140.5 177.0 L139.7 177.4 L138.8 177.7 L137.9 177.6 L136.9 177.3 L136.1 176.7 L135.4 175.8 L135.1 174.7 L135.0 173.6 L135.3 172.4 L136.0 171.3 L137.0 170.4 L138.2 169.9 L139.6 169.7 L141.0 169.9" fill="none" stroke="#2b1420" stroke-width="2.1" stroke-linecap="round"/>
<path d="M151.7 173.8 L151.9 173.7 L152.3 173.8 L152.6 174.0 L152.8 174.3 L153.0 174.7 L153.0 175.2 L152.9 175.7 L152.6 176.1 L152.1 176.5 L151.5 176.8 L150.8 176.8 L150.1 176.6 L149.4 176.2 L148.9 175.6 L148.5 174.8 L148.4 173.9 L148.5 173.0 L149.0 172.1 L149.7 171.3 L150.7 170.8 L151.8 170.6 L152.9 170.7 L154.1 171.1 L155.1 171.9 L155.8 173.0 L156.2 174.3 L156.2 175.7 L155.8 177.1" fill="none" stroke="#2b1420" stroke-width="2.1" stroke-linecap="round"/>
<path d="M164.7 174.8 L164.7 175.0 L164.6 175.3 L164.4 175.6 L164.1 175.9 L163.6 176.0 L163.2 175.9 L162.7 175.7 L162.2 175.4 L161.9 174.8 L161.8 174.2 L161.8 173.5 L162.1 172.8 L162.5 172.2 L163.2 171.7 L164.1 171.5 L165.0 171.5 L165.9 171.8 L166.7 172.3 L167.4 173.1 L167.8 174.1 L167.9 175.3 L167.6 176.4 L167.0 177.5 L166.1 178.4 L164.9 178.9 L163.6 179.2 L162.2 179.0 L160.9 178.4" fill="none" stroke="#2b1420" stroke-width="2.1" stroke-linecap="round"/>
<path d="M176.2 175.2 L175.9 175.1 L175.6 175.0 L175.3 174.8 L175.1 174.4 L175.1 174.0 L175.2 173.5 L175.5 173.0 L175.9 172.6 L176.4 172.4 L177.1 172.3 L177.8 172.4 L178.4 172.8 L179.0 173.3 L179.3 174.1 L179.5 174.9 L179.4 175.8 L179.0 176.7 L178.3 177.5 L177.4 178.0 L176.4 178.3 L175.2 178.2 L174.1 177.8 L173.2 177.1 L172.4 176.1 L172.0 174.9 L171.9 173.5 L172.3 172.2 L173.0 170.9" fill="none" stroke="#2b1420" stroke-width="2.1" stroke-linecap="round"/>
<path d="M200.9 174.1 L200.9 173.8 L201.1 173.5 L201.4 173.3 L201.8 173.2 L202.2 173.2 L202.7 173.3 L203.1 173.7 L203.4 174.1 L203.6 174.7 L203.6 175.4 L203.4 176.0 L203.0 176.6 L202.3 177.1 L201.5 177.4 L200.7 177.4 L199.8 177.2 L199.0 176.7 L198.3 175.9 L197.9 175.0 L197.8 173.9 L198.0 172.8 L198.5 171.7 L199.3 170.8 L200.5 170.2 L201.7 170.0 L203.1 170.1 L204.4 170.6 L205.5 171.5" fill="none" stroke="#2b1420" stroke-width="2.1" stroke-linecap="round"/>
<path d="M214.5 173.9 L214.8 174.0 L215.0 174.2 L215.2 174.6 L215.3 174.9 L215.2 175.4 L215.0 175.8 L214.6 176.2 L214.1 176.5 L213.5 176.6 L212.9 176.5 L212.2 176.2 L211.7 175.7 L211.3 175.0 L211.1 174.2 L211.2 173.3 L211.6 172.5 L212.2 171.7 L213.0 171.2 L214.0 170.9 L215.1 170.9 L216.2 171.2 L217.1 171.9 L217.9 172.8 L218.4 174.0 L218.5 175.3 L218.2 176.6 L217.5 177.9 L216.5 178.9" fill="none" stroke="#2b1420" stroke-width="2.1" stroke-linecap="round"/>
<path d="M227.0 175.1 L226.9 175.3 L226.6 175.5 L226.3 175.7 L225.9 175.7 L225.5 175.6 L225.1 175.3 L224.7 174.9 L224.5 174.4 L224.5 173.8 L224.7 173.1 L225.1 172.5 L225.6 172.1 L226.4 171.8 L227.2 171.7 L228.0 171.9 L228.8 172.3 L229.5 173.0 L229.9 173.9 L230.1 175.0 L230.0 176.1 L229.5 177.1 L228.7 178.0 L227.6 178.6 L226.4 178.9 L225.1 178.8 L223.8 178.4 L222.7 177.5 L221.9 176.4" fill="none" stroke="#2b1420" stroke-width="2.1" stroke-linecap="round"/>
<path d="M238.4 174.9 L238.1 174.7 L237.9 174.5 L237.9 174.1 L237.9 173.7 L238.0 173.3 L238.4 173.0 L238.8 172.7 L239.4 172.6 L240.0 172.6 L240.6 172.9 L241.1 173.3 L241.5 174.0 L241.7 174.7 L241.7 175.5 L241.4 176.4 L240.8 177.1 L240.1 177.7 L239.1 178.0 L238.1 178.0 L237.0 177.7 L236.1 177.1 L235.3 176.2 L234.8 175.1 L234.7 173.9 L234.9 172.6 L235.5 171.4 L236.5 170.4 L237.7 169.7" fill="none" stroke="#2b1420" stroke-width="2.1" stroke-linecap="round"/>
<path d="M251.2 173.8 L251.4 173.6 L251.6 173.5 L252.0 173.4 L252.4 173.5 L252.8 173.7 L253.1 174.1 L253.3 174.6 L253.4 175.1 L253.2 175.7 L252.9 176.3 L252.4 176.8 L251.7 177.1 L250.9 177.2 L250.1 177.0 L249.3 176.6 L248.7 176.0 L248.2 175.1 L248.0 174.2 L248.1 173.1 L248.6 172.1 L249.3 171.2 L250.3 170.6 L251.4 170.3 L252.7 170.3 L253.9 170.7 L255.1 171.4 L255.9 172.5 L256.5 173.9" fill="none" stroke="#2b1420" stroke-width="2.1" stroke-linecap="round"/>
<path d="M264.7 174.3 L264.9 174.5 L265.0 174.8 L265.0 175.1 L264.9 175.5 L264.6 175.9 L264.2 176.1 L263.7 176.3 L263.1 176.3 L262.6 176.1 L262.1 175.7 L261.7 175.1 L261.4 174.4 L261.4 173.6 L261.7 172.8 L262.2 172.1 L262.9 171.5 L263.8 171.2 L264.8 171.1 L265.8 171.3 L266.7 171.9 L267.5 172.7 L268.0 173.8 L268.2 175.0 L268.0 176.2 L267.5 177.4 L266.6 178.4 L265.4 179.1 L264.0 179.5" fill="none" stroke="#2b1420" stroke-width="2.1" stroke-linecap="round"/>
<path d="M289.1 175.2 L288.9 175.4 L288.6 175.5 L288.2 175.4 L287.9 175.3 L287.6 174.9 L287.3 174.5 L287.3 174.0 L287.4 173.4 L287.6 172.9 L288.1 172.4 L288.7 172.1 L289.4 172.0 L290.2 172.1 L291.0 172.4 L291.6 173.0 L292.1 173.8 L292.3 174.7 L292.3 175.7 L291.9 176.7 L291.2 177.6 L290.3 178.2 L289.2 178.6 L288.0 178.6 L286.8 178.3 L285.7 177.6 L284.8 176.6 L284.2 175.3 L284.0 173.8" fill="none" stroke="#2b1420" stroke-width="2.1" stroke-linecap="round"/>
<path d="M300.8 174.5 L300.6 174.3 L300.6 174.0 L300.7 173.6 L300.9 173.3 L301.3 173.0 L301.7 172.9 L302.2 172.8 L302.8 173.0 L303.3 173.4 L303.7 173.9 L303.9 174.5 L304.0 175.3 L303.8 176.0 L303.3 176.7 L302.7 177.3 L301.8 177.7 L300.9 177.8 L299.9 177.6 L299.0 177.1 L298.2 176.3 L297.6 175.3 L297.4 174.2 L297.5 173.0 L298.0 171.8 L298.9 170.8 L300.0 170.0 L301.3 169.7 L302.8 169.7" fill="none" stroke="#2b1420" stroke-width="2.1" stroke-linecap="round"/>
<path d="M314.1 173.8 L314.3 173.7 L314.6 173.7 L315.0 173.8 L315.3 174.1 L315.5 174.4 L315.6 174.9 L315.5 175.4 L315.3 176.0 L314.9 176.4 L314.3 176.7 L313.7 176.9 L312.9 176.8 L312.2 176.5 L311.6 176.0 L311.1 175.3 L310.8 174.4 L310.8 173.4 L311.2 172.5 L311.8 171.6 L312.6 171.0 L313.7 170.6 L314.9 170.5 L316.0 170.8 L317.1 171.4 L318.0 172.4 L318.6 173.6 L318.8 175.0 L318.6 176.4" fill="none" stroke="#2b1420" stroke-width="2.1" stroke-linecap="round"/>
<path d="M327.2 174.7 L327.3 174.9 L327.2 175.2 L327.1 175.6 L326.8 175.8 L326.4 176.0 L325.9 176.0 L325.4 175.9 L324.9 175.6 L324.5 175.1 L324.2 174.5 L324.2 173.9 L324.3 173.1 L324.7 172.4 L325.3 171.9 L326.1 171.5 L327.0 171.4 L328.0 171.5 L328.9 171.9 L329.6 172.6 L330.2 173.6 L330.4 174.7 L330.4 175.9 L329.9 177.0 L329.2 178.0 L328.1 178.8 L326.8 179.2 L325.4 179.2 L324.0 178.8" fill="none" stroke="#2b1420" stroke-width="2.1" stroke-linecap="round"/>
<path d="M94.1 115.5 L93.9 115.7 L93.7 115.8 L93.4 115.8 L93.1 115.7 L92.8 115.4 L92.6 115.1 L92.5 114.7 L92.6 114.3 L92.7 113.9 L93.1 113.5 L93.5 113.2 L94.0 113.1 L94.6 113.1 L95.2 113.3 L95.8 113.7 L96.2 114.2 L96.4 114.9 L96.5 115.7 L96.3 116.4 L95.8 117.1 L95.2 117.7 L94.4 118.1 L93.5 118.2 L92.5 118.0 L91.6 117.6 L90.9 116.9 L90.3 116.0 L90.1 114.9" fill="none" stroke="#ffa81a" stroke-width="1.5" stroke-linecap="round"/>
<path d="M104.1 114.5 L104.3 114.4 L104.5 114.5 L104.7 114.6 L104.9 114.9 L105.0 115.2 L105.0 115.6 L104.9 115.9 L104.6 116.3 L104.3 116.6 L103.8 116.7 L103.3 116.7 L102.7 116.6 L102.2 116.2 L101.8 115.7 L101.6 115.1 L101.6 114.4 L101.7 113.7 L102.1 113.1 L102.7 112.5 L103.4 112.2 L104.3 112.0 L105.2 112.2 L106.0 112.6 L106.7 113.2 L107.2 114.1 L107.5 115.1 L107.4 116.1 L107.0 117.2" fill="none" stroke="#ffa81a" stroke-width="1.5" stroke-linecap="round"/>
<path d="M94.1 128.5 L93.9 128.7 L93.7 128.8 L93.4 128.8 L93.1 128.7 L92.8 128.4 L92.6 128.1 L92.5 127.7 L92.6 127.3 L92.7 126.9 L93.1 126.5 L93.5 126.2 L94.0 126.1 L94.6 126.1 L95.2 126.3 L95.8 126.7 L96.2 127.2 L96.4 127.9 L96.5 128.7 L96.3 129.4 L95.8 130.1 L95.2 130.7 L94.4 131.1 L93.5 131.2 L92.5 131.0 L91.6 130.6 L90.9 129.9 L90.3 129.0 L90.1 127.9" fill="none" stroke="#ffa81a" stroke-width="1.5" stroke-linecap="round"/>
<path d="M104.1 127.5 L104.3 127.4 L104.5 127.5 L104.7 127.6 L104.9 127.9 L105.0 128.2 L105.0 128.6 L104.9 128.9 L104.6 129.3 L104.3 129.6 L103.8 129.7 L103.3 129.7 L102.7 129.6 L102.2 129.2 L101.8 128.7 L101.6 128.1 L101.6 127.4 L101.7 126.7 L102.1 126.1 L102.7 125.5 L103.4 125.2 L104.3 125.0 L105.2 125.2 L106.0 125.6 L106.7 126.2 L107.2 127.1 L107.5 128.1 L107.4 129.1 L107.0 130.2" fill="none" stroke="#ffa81a" stroke-width="1.5" stroke-linecap="round"/>
<path d="M184.9 115.5 L184.7 115.7 L184.5 115.8 L184.2 115.8 L183.9 115.7 L183.6 115.4 L183.4 115.1 L183.3 114.7 L183.4 114.3 L183.5 113.9 L183.9 113.5 L184.3 113.2 L184.8 113.1 L185.4 113.1 L186.0 113.3 L186.6 113.7 L187.0 114.2 L187.2 114.9 L187.3 115.7 L187.1 116.4 L186.6 117.1 L186.0 117.7 L185.2 118.1 L184.3 118.2 L183.3 118.0 L182.4 117.6 L181.7 116.9 L181.1 116.0 L180.9 114.9" fill="none" stroke="#ffa81a" stroke-width="1.5" stroke-linecap="round"/>
<path d="M194.9 114.5 L195.1 114.4 L195.3 114.5 L195.5 114.6 L195.7 114.9 L195.8 115.2 L195.8 115.6 L195.7 115.9 L195.4 116.3 L195.1 116.6 L194.6 116.7 L194.1 116.7 L193.5 116.6 L193.0 116.2 L192.6 115.7 L192.4 115.1 L192.4 114.4 L192.5 113.7 L192.9 113.1 L193.5 112.5 L194.2 112.2 L195.1 112.0 L196.0 112.2 L196.8 112.6 L197.5 113.2 L198.0 114.1 L198.3 115.1 L198.2 116.1 L197.8 117.2" fill="none" stroke="#ffa81a" stroke-width="1.5" stroke-linecap="round"/>
<path d="M184.9 128.5 L184.7 128.7 L184.5 128.8 L184.2 128.8 L183.9 128.7 L183.6 128.4 L183.4 128.1 L183.3 127.7 L183.4 127.3 L183.5 126.9 L183.9 126.5 L184.3 126.2 L184.8 126.1 L185.4 126.1 L186.0 126.3 L186.6 126.7 L187.0 127.2 L187.2 127.9 L187.3 128.7 L187.1 129.4 L186.6 130.1 L186.0 130.7 L185.2 131.1 L184.3 131.2 L183.3 131.0 L182.4 130.6 L181.7 129.9 L181.1 129.0 L180.9 127.9" fill="none" stroke="#ffa81a" stroke-width="1.5" stroke-linecap="round"/>
<path d="M194.9 127.5 L195.1 127.4 L195.3 127.5 L195.5 127.6 L195.7 127.9 L195.8 128.2 L195.8 128.6 L195.7 128.9 L195.4 129.3 L195.1 129.6 L194.6 129.7 L194.1 129.7 L193.5 129.6 L193.0 129.2 L192.6 128.7 L192.4 128.1 L192.4 127.4 L192.5 126.7 L192.9 126.1 L193.5 125.5 L194.2 125.2 L195.1 125.0 L196.0 125.2 L196.8 125.6 L197.5 126.2 L198.0 127.1 L198.3 128.1 L198.2 129.1 L197.8 130.2" fill="none" stroke="#ffa81a" stroke-width="1.5" stroke-linecap="round"/>
<path d="M276.8 115.5 L276.6 115.7 L276.4 115.8 L276.1 115.8 L275.8 115.7 L275.5 115.4 L275.3 115.1 L275.2 114.7 L275.3 114.3 L275.4 113.9 L275.8 113.5 L276.2 113.2 L276.7 113.1 L277.3 113.1 L277.9 113.3 L278.5 113.7 L278.9 114.2 L279.1 114.9 L279.2 115.7 L279.0 116.4 L278.5 117.1 L277.9 117.7 L277.1 118.1 L276.2 118.2 L275.2 118.0 L274.3 117.6 L273.6 116.9 L273.0 116.0 L272.8 114.9" fill="none" stroke="#ffa81a" stroke-width="1.5" stroke-linecap="round"/>
<path d="M286.8 114.5 L287.0 114.4 L287.2 114.5 L287.4 114.6 L287.6 114.9 L287.7 115.2 L287.7 115.6 L287.6 115.9 L287.3 116.3 L287.0 116.6 L286.5 116.7 L286.0 116.7 L285.4 116.6 L284.9 116.2 L284.5 115.7 L284.3 115.1 L284.3 114.4 L284.4 113.7 L284.8 113.1 L285.4 112.5 L286.1 112.2 L287.0 112.0 L287.9 112.2 L288.7 112.6 L289.4 113.2 L289.9 114.1 L290.2 115.1 L290.1 116.1 L289.7 117.2" fill="none" stroke="#ffa81a" stroke-width="1.5" stroke-linecap="round"/>
<path d="M276.8 128.5 L276.6 128.7 L276.4 128.8 L276.1 128.8 L275.8 128.7 L275.5 128.4 L275.3 128.1 L275.2 127.7 L275.3 127.3 L275.4 126.9 L275.8 126.5 L276.2 126.2 L276.7 126.1 L277.3 126.1 L277.9 126.3 L278.5 126.7 L278.9 127.2 L279.1 127.9 L279.2 128.7 L279.0 129.4 L278.5 130.1 L277.9 130.7 L277.1 131.1 L276.2 131.2 L275.2 131.0 L274.3 130.6 L273.6 129.9 L273.0 129.0 L272.8 127.9" fill="none" stroke="#ffa81a" stroke-width="1.5" stroke-linecap="round"/>
<path d="M286.8 127.5 L287.0 127.4 L287.2 127.5 L287.4 127.6 L287.6 127.9 L287.7 128.2 L287.7 128.6 L287.6 128.9 L287.3 129.3 L287.0 129.6 L286.5 129.7 L286.0 129.7 L285.4 129.6 L284.9 129.2 L284.5 128.7 L284.3 128.1 L284.3 127.4 L284.4 126.7 L284.8 126.1 L285.4 125.5 L286.1 125.2 L287.0 125.0 L287.9 125.2 L288.7 125.6 L289.4 126.2 L289.9 127.1 L290.2 128.1 L290.1 129.1 L289.7 130.2" fill="none" stroke="#ffa81a" stroke-width="1.5" stroke-linecap="round"/>
</g></svg>

<!-- eye icon -->
<svg class="a" style="left:59px;top:560px" width="54" height="52" viewBox="0 0 54 52">
<rect width="54" height="52" fill="#f4c832"/>
<rect x="25.8" y="34" width="2.4" height="18" fill="#4a5aa8"/>
<circle cx="27" cy="20" r="17" fill="#4a5aa8"/>
<circle cx="27" cy="20" r="13.6" fill="#fff"/>
<path d="M16 19.5c6-7.5 16-7.5 22 0-6 6.5-16 6.5-22 0z" fill="#262626"/>
<circle cx="27" cy="19" r="3.6" fill="#fff"/><circle cx="27" cy="19.2" r="2.1" fill="#262626"/>
</svg>
<div class="a serif" style="left:119px;top:575px;font-size:16px;color:#2e2e2e;letter-spacing:.5px;white-space:nowrap;line-height:18px;text-shadow:0 0 .3px #555">Мына текеметте қандай ою-өрнек түрлері қолданылған?</div>
<!-- zoom buttons -->
<div class="a zb" style="left:548px;top:451px"><svg width="36" height="36" viewBox="0 0 36 36"><path d="M12 16h4v-4M24 16h-4v-4M12 20h4v4M24 20h-4v4" stroke="#5f6368" stroke-width="1.8" fill="none"/></svg></div>
<div class="a zb" style="left:548px;top:511px"><svg width="36" height="36" viewBox="0 0 36 36"><path d="M18 11v14M11 18h14" stroke="#5f6368" stroke-width="2"/></svg></div>
<div class="a zb" style="left:548px;top:557px"><svg width="36" height="36" viewBox="0 0 36 36"><path d="M11 18h14" stroke="#5f6368" stroke-width="2"/></svg></div>
<!-- horizontal scrollbar -->
<div class="a" style="left:8px;top:624px;width:624px;height:16px;background:#f1f1f1"></div>
<div class="a" style="left:615px;top:624px;width:17px;height:16px;background:#dcdcdc"></div>
<div class="a" style="left:25px;top:626px;width:563px;height:13px;background:#c1c1c1"></div>
<svg class="a" style="left:12px;top:627px" width="8" height="10" viewBox="0 0 8 10"><path d="M6.5 1v8L2 5z" fill="#a3a3a3"/></svg>
<svg class="a" style="left:602px;top:627px" width="8" height="10" viewBox="0 0 8 10"><path d="M1.5 1v8L6 5z" fill="#505050"/></svg>
<!-- download shelf -->
<div class="a" style="left:8px;top:640px;width:624px;height:58px;background:#fff;border-top:1px solid #e0e0e0"></div>
<svg class="a" style="left:28px;top:661px" width="18" height="17" viewBox="0 0 18 17"><path d="M5 0.5h9l3.5 3.5v12.5H5z" fill="#fff" stroke="#8a8a8a" stroke-width="1"/><path d="M8 6h7M8 8.5h7M8 11h7M8 13.5h7" stroke="#8a8a8a" stroke-width="1"/><rect x="0" y="3" width="10" height="11" fill="#2b579a"/><path d="M1.5 5.5l1.4 6 1.6-4.5 1.6 4.5 1.4-6" stroke="#fff" stroke-width="1.1" fill="none"/></svg>
<div class="a shelf" style="left:57px;top:662px">lesson19-4.docx</div>
<svg class="a" style="left:214px;top:665px" width="13" height="8" viewBox="0 0 13 8"><path d="M1 7l5.5-5.5L12 7" stroke="#5f6368" stroke-width="1.6" fill="none"/></svg>
<div class="a" style="left:244px;top:648px;width:1px;height:43px;background:#dadce0"></div>
<svg class="a" style="left:260px;top:661px" width="18" height="17" viewBox="0 0 18 17"><path d="M5 0.5h9l3.5 3.5v12.5H5z" fill="#fff" stroke="#8a8a8a" stroke-width="1"/><path d="M8 6h7M8 8.5h7M8 11h7M8 13.5h7" stroke="#8a8a8a" stroke-width="1"/><rect x="0" y="3" width="10" height="11" fill="#2b579a"/><path d="M1.5 5.5l1.4 6 1.6-4.5 1.6 4.5 1.4-6" stroke="#fff" stroke-width="1.1" fill="none"/></svg>
<div class="a shelf" style="left:290px;top:662px">lesson 21-4.docx</div>
<svg class="a" style="left:447px;top:665px" width="13" height="8" viewBox="0 0 13 8"><path d="M1 7l5.5-5.5L12 7" stroke="#5f6368" stroke-width="1.6" fill="none"/></svg>
<div class="a" style="left:477px;top:648px;width:1px;height:43px;background:#dadce0"></div>
<div class="a" style="left:490px;top:653px;width:105px;height:32px;border:1px solid #dadce0;border-radius:4px;color:#1a73e8;font-size:12.5px;text-align:center;line-height:30px">Показать все</div>
<svg class="a" style="left:607px;top:663px" width="13" height="13" viewBox="0 0 13 13"><path d="M1.5 1.5l10 10M11.5 1.5l-10 10" stroke="#5f6368" stroke-width="1.8"/></svg>
<!-- WORD WINDOW -->
<div class="a" style="left:661px;top:3px;width:703px;height:698px;background:#2b579a"></div>
<!-- title bar -->
<svg class="a" style="left:682px;top:12px" width="14" height="14" viewBox="0 0 14 14"><path d="M0.9 0.9h12.2v12.2H0.9z" fill="none" stroke="#fff" stroke-width="1.8"/><path d="M3 8h8v5.5H3z" fill="#fff"/><path d="M5.5 9.5h2v4h-2z" fill="#2b579a"/></svg>
<svg class="a" style="left:725px;top:11px" width="15" height="15" viewBox="0 0 15 15"><path d="M5 1.5L1.5 5 5 8.5" stroke="#fff" stroke-width="1.8" fill="none"/><path d="M2 5h6.5a4.5 4.5 0 0 1 1 8.8" stroke="#fff" stroke-width="1.8" fill="none"/></svg>
<svg class="a" style="left:749px;top:16px" width="6" height="4" viewBox="0 0 6 4"><path d="M0 0h6L3 3.5z" fill="#fff"/></svg>
<svg class="a" style="left:772px;top:11px" width="14" height="15" viewBox="0 0 14 15"><path d="M9 3.2A5 5 0 1 0 12.3 7" stroke="#6b8cc0" stroke-width="1.7" fill="none"/><path d="M7.5 1.2l4.6.3-.8 4.5z" fill="#6b8cc0"/></svg>
<svg class="a" style="left:821px;top:15px" width="7" height="8" viewBox="0 0 7 8"><path d="M0.5 1h6" stroke="#fff" stroke-width="1.2"/><path d="M0 3.5h7L3.5 7.5z" fill="#fff"/></svg>
<div class="a" style="left:897px;top:13px;width:229px;font-size:12.5px;line-height:16px;color:#fff;white-space:nowrap">Көркем еңбек. 4-сынып. 2-тоқсан. - Word</div>
<svg class="a" style="left:1195px;top:13px" width="14" height="12" viewBox="0 0 14 12"><rect x="0.6" y="0.6" width="12.8" height="10.8" fill="none" stroke="#fff" stroke-width="1.2"/><path d="M0.6 3h12.8" stroke="#fff" stroke-width="1.2"/><path d="M7 11V5.5M4.8 7.6L7 5.4l2.2 2.2" stroke="#fff" stroke-width="1.3" fill="none"/></svg>
<div class="a" style="left:1243px;top:20px;width:10px;height:2px;background:#fff"></div>
<div class="a" style="left:1289px;top:14px;width:10px;height:10px;border:1.5px solid #fff;border-top-width:2.5px"></div>
<svg class="a" style="left:1334px;top:13px" width="12" height="12" viewBox="0 0 12 12"><path d="M1 1l10 10M11 1L1 11" stroke="#fff" stroke-width="2"/></svg>
<!-- tab row -->
<div class="a" style="left:993px;top:37px;width:111px;height:24px;background:#204a87"></div>
<div class="a" style="left:1226px;top:37px;width:125px;height:24px;background:#1e4279"></div>
<div class="a" style="left:1350px;top:37px;width:13px;height:24px;background:#fff;border-left:1px solid #c8c8c8"></div>
<svg class="a" style="left:1354px;top:45px" width="5" height="8" viewBox="0 0 5 8"><path d="M0 0v8l4.5-4z" fill="#666"/></svg>
<div class="a" style="left:725px;top:37px;width:33px;height:24px;background:#f1f1f1"></div>
<div class="a wtab" style="left:677px">Файл</div>
<div class="a wtab" style="left:728px;color:#2b579a;width:29px;overflow:hidden">Глав</div>
<div class="a wtab" style="left:762px;width:28px;overflow:hidden">Вста</div>
<div class="a wtab" style="left:796px;width:28px;overflow:hidden">Диза</div>
<div class="a wtab" style="left:830px;width:27px;overflow:hidden">Маке</div>
<div class="a wtab" style="left:864px;width:27px;overflow:hidden">Ссыл</div>
<div class="a wtab" style="left:898px;width:28px;overflow:hidden">Расс</div>
<div class="a wtab" style="left:932px;width:28px;overflow:hidden">Реце</div>
<div class="a wtab" style="left:966px">Вид</div>
<div class="a wtab" style="left:999px">Конструкт</div>
<div class="a wtab" style="left:1064px">Макет</div>
<div class="a wtab" style="left:1131px;color:#a9bddb">Помощь</div>
<div class="a wtab" style="left:1191px">Вход</div>
<div class="a wtab" style="left:1252px">Общий доступ</div>
<div class="a" style="left:1104px;top:37px;width:22px;height:24px;background:#2b579a"></div>
<div class="a" style="left:1176px;top:37px;width:14px;height:24px;background:#2b579a"></div>
<svg class="a" style="left:1116px;top:41px" width="12" height="16" viewBox="0 0 12 16"><path d="M6 1a4.6 4.6 0 0 0-2.7 8.3c.5.4.7 1 .7 1.6V12h4v-1.1c0-.6.2-1.2.7-1.6A4.6 4.6 0 0 0 6 1z" fill="none" stroke="#a9bddb" stroke-width="1.2"/><path d="M4 13.5h4M4.5 15h3" stroke="#a9bddb" stroke-width="1.1"/></svg>
<svg class="a" style="left:1233px;top:41px" width="16" height="16" viewBox="0 0 16 16"><circle cx="6.5" cy="5" r="3.8" fill="none" stroke="#fff" stroke-width="1.4"/><path d="M1 15.5c0-3.5 2.3-6 5.5-6 1.3 0 2.4.4 3.2 1" fill="none" stroke="#fff" stroke-width="1.4"/><path d="M12.5 10v6M9.5 13h6" stroke="#fff" stroke-width="1.4"/></svg>
<div class="a" style="left:791px;top:41px;width:1px;height:18px;background:#7d9ccb"></div>
<div class="a" style="left:825px;top:41px;width:1px;height:18px;background:#7d9ccb"></div>
<div class="a" style="left:859px;top:41px;width:1px;height:18px;background:#7d9ccb"></div>
<div class="a" style="left:893px;top:41px;width:1px;height:18px;background:#7d9ccb"></div>
<div class="a" style="left:927px;top:41px;width:1px;height:18px;background:#7d9ccb"></div>
<div class="a" style="left:961px;top:41px;width:1px;height:18px;background:#7d9ccb"></div>
<div class="a" style="left:993px;top:41px;width:1px;height:18px;background:#7d9ccb"></div>
<div class="a" style="left:1058px;top:41px;width:1px;height:18px;background:#7d9ccb"></div>
<div class="a" style="left:1103px;top:41px;width:1px;height:18px;background:#7d9ccb"></div>
<!-- ribbon body -->
<div class="a" style="left:662px;top:61px;width:701px;height:92px;background:#f1f1f1;border-bottom:1px solid #d6d6d6"></div>
<!-- Clipboard group -->
<svg class="a" style="left:686px;top:67px" width="32" height="34" viewBox="0 0 32 34"><rect x="2" y="4" width="23" height="26" rx="1.5" fill="#e9be6b"/><path d="M8 5.5h11v-2h-3.2a2.3 2.3 0 0 0-4.6 0H8z" fill="#6d6d6d"/><path d="M15.5 13.5h8.5l5.5 5.5v14H15.5z" fill="#fff" stroke="#6d6d6d" stroke-width="1.2"/><path d="M24 13.5v5.5h5.5" fill="none" stroke="#6d6d6d" stroke-width="1.1"/></svg>
<div class="a rl" style="left:676px;top:103px;font-size:12px;color:#333">Вставить</div>
<svg class="a" style="left:697px;top:122px" width="7" height="4" viewBox="0 0 7 4"><path d="M0 0h7L3.5 4z" fill="#666"/></svg>
<svg class="a" style="left:730px;top:66px" width="16" height="16" viewBox="0 0 16 16"><path d="M4 1l7 10M12 1L5 11" stroke="#a5a5a5" stroke-width="1.3"/><circle cx="4" cy="13" r="2.3" fill="none" stroke="#a5a5a5" stroke-width="1.2"/><circle cx="12" cy="13" r="2.3" fill="none" stroke="#a5a5a5" stroke-width="1.2"/></svg>
<svg class="a" style="left:730px;top:90px" width="16" height="16" viewBox="0 0 16 16"><path d="M1 1h6l2 2v8H1z" fill="none" stroke="#a5a5a5" stroke-width="1.1"/><path d="M6 5h6l2.5 2.5v8H6z" fill="#f1f1f1" stroke="#a5a5a5" stroke-width="1.1"/><path d="M8 10h5M8 12h5M3 5h2M3 7h2" stroke="#a5a5a5" stroke-width="1"/></svg>
<svg class="a" style="left:730px;top:112px" width="16" height="16" viewBox="0 0 16 16"><path d="M9 5l5-4 1.5 1.5-4 5z" fill="#6d6d6d"/><path d="M1.5 9.5l5-4.5 4.5 4.5-4.5 5z" fill="#e9be6b"/><path d="M6.5 5l1.5-1.5 4.5 4.5-1.5 1.5z" fill="#6d6d6d"/></svg>
<div class="a rl" style="left:665px;top:138px;font-size:11.5px">Буфер обмена</div>
<svg class="a" style="left:750px;top:141px" width="8" height="8" viewBox="0 0 8 8"><path d="M0.5 7.5v-7h7" fill="none" stroke="#888" stroke-width="1"/><path d="M3 3l4 4M4.5 7h2.5V4.5" stroke="#888" stroke-width="1" fill="none"/></svg>
<div class="a" style="left:761px;top:65px;width:1px;height:84px;background:#d8d8d8"></div>
<!-- Font group -->
<div class="a" style="left:766px;top:65px;width:131px;height:21px;background:#fff;border:1px solid #c6c6c6"></div>
<div class="a" style="left:770px;top:68px;font-size:12px;line-height:15px;color:#333;white-space:nowrap">Times New Roman</div>
<svg class="a" style="left:886px;top:74px" width="6" height="4" viewBox="0 0 6 4"><path d="M0 0h6L3 3.5z" fill="#666"/></svg>
<div class="a" style="left:896px;top:65px;width:56px;height:21px;background:#fff;border:1px solid #c6c6c6"></div>
<div class="a" style="left:901px;top:68px;font-size:12.5px;line-height:15px;color:#333">11</div>
<svg class="a" style="left:942px;top:74px" width="6" height="4" viewBox="0 0 6 4"><path d="M0 0h6L3 3.5z" fill="#666"/></svg>
<div class="a" style="left:771px;top:90px;font-size:13.5px;font-weight:bold;line-height:16px;color:#444">Ж</div>
<div class="a" style="left:794px;top:90px;font-size:13.5px;font-weight:bold;font-style:italic;line-height:16px;color:#444">К</div>
<div class="a" style="left:815px;top:90px;font-size:13.5px;font-weight:bold;line-height:16px;color:#444;text-decoration:underline">Ч</div>
<svg class="a" style="left:834px;top:97px" width="6" height="4" viewBox="0 0 6 4"><path d="M0 0h6L3 3.5z" fill="#666"/></svg>
<div class="a" style="left:846px;top:91px;font-size:11.5px;line-height:15px;color:#444;text-decoration:line-through;letter-spacing:-.5px">abc</div>
<div class="a" style="left:871px;top:90px;font-size:13px;font-weight:bold;line-height:16px;color:#444">x<span style="font-size:8px;color:#2e75b6;vertical-align:-2px">2</span></div>
<div class="a" style="left:893px;top:90px;font-size:13px;font-weight:bold;line-height:16px;color:#444">x<span style="font-size:8px;color:#2e75b6;vertical-align:6px">2</span></div>
<div class="a" style="left:914px;top:89px;width:1px;height:20px;background:#d8d8d8"></div>
<svg class="a" style="left:922px;top:89px" width="16" height="17" viewBox="0 0 16 17"><path d="M2 8L5 1l3 7M3.2 5.5h3.6" stroke="#777" stroke-width="1.1" fill="none"/><path d="M6 11l6-6 3 3-6 6z" fill="#e87d8c"/><path d="M4 13l2-2 3 3-1 1.5H5z" fill="#f2b6bf"/></svg>
<svg class="a" style="left:770px;top:113px" width="15" height="16" viewBox="0 0 15 16"><path d="M1.5 15L7.5 1l6 14M4 10h7" stroke="#2e75b6" stroke-width="3" fill="none"/><path d="M1.5 15L7.5 1l6 14M4 10h7" stroke="#fff" stroke-width="1" fill="none"/></svg>
<svg class="a" style="left:788px;top:120px" width="6" height="4" viewBox="0 0 6 4"><path d="M0 0h6L3 3.5z" fill="#666"/></svg>
<svg class="a" style="left:801px;top:112px" width="17" height="17" viewBox="0 0 17 17"><text x="0" y="7" font-size="8" fill="#555" font-family="Liberation Sans">ab</text><path d="M7 11l7-8 1.5 1.5-7 8z" fill="#666"/><rect x="1" y="14" width="15" height="2.5" fill="#fff" stroke="#888" stroke-width=".8"/></svg>
<svg class="a" style="left:823px;top:120px" width="6" height="4" viewBox="0 0 6 4"><path d="M0 0h6L3 3.5z" fill="#666"/></svg>
<svg class="a" style="left:835px;top:112px" width="17" height="17" viewBox="0 0 17 17"><path d="M3 12L8.5 1 14 12M5 8h7" stroke="#555" stroke-width="1.6" fill="none"/><rect x="1" y="13.5" width="16" height="3" fill="#e00"/></svg>
<svg class="a" style="left:857px;top:120px" width="6" height="4" viewBox="0 0 6 4"><path d="M0 0h6L3 3.5z" fill="#666"/></svg>
<div class="a" style="left:869px;top:113px;font-size:13px;line-height:16px;color:#555">Aa</div>
<svg class="a" style="left:890px;top:120px" width="6" height="4" viewBox="0 0 6 4"><path d="M0 0h6L3 3.5z" fill="#666"/></svg>
<div class="a" style="left:904px;top:112px;width:1px;height:20px;background:#d8d8d8"></div>
<div class="a" style="left:914px;top:114px;font-size:14px;line-height:16px;color:#555">A</div>
<svg class="a" style="left:924px;top:111px" width="6" height="4" viewBox="0 0 6 4"><path d="M0 4h6L3 0z" fill="#2e75b6"/></svg>
<div class="a" style="left:938px;top:116px;font-size:12px;line-height:14px;color:#555">A</div>
<svg class="a" style="left:946px;top:111px" width="6" height="4" viewBox="0 0 6 4"><path d="M0 0h6L3 4z" fill="#2e75b6"/></svg>
<div class="a rl" style="left:832px;top:138px">Шрифт</div>
<svg class="a" style="left:945px;top:141px" width="8" height="8" viewBox="0 0 8 8"><path d="M0.5 7.5v-7h7" fill="none" stroke="#888" stroke-width="1"/><path d="M3 3l4 4M4.5 7h2.5V4.5" stroke="#888" stroke-width="1" fill="none"/></svg>
<div class="a" style="left:957px;top:65px;width:1px;height:84px;background:#d8d8d8"></div>
<!-- Paragraph group -->
<svg class="a" style="left:965px;top:67px" width="15" height="15" viewBox="0 0 15 15"><circle cx="1.8" cy="2" r="1.5" fill="#2e75b6"/><circle cx="1.8" cy="7.5" r="1.5" fill="#2e75b6"/><circle cx="1.8" cy="13" r="1.5" fill="#2e75b6"/><path d="M5 2h9M5 7.5h9M5 13h9" stroke="#666" stroke-width="1.2"/></svg>
<svg class="a" style="left:987px;top:72px" width="6" height="4" viewBox="0 0 6 4"><path d="M0 0h6L3 3.5z" fill="#666"/></svg>
<svg class="a" style="left:999px;top:67px" width="15" height="15" viewBox="0 0 15 15"><text x="0" y="4.5" font-size="5" fill="#2e75b6" font-family="Liberation Sans" font-weight="bold">1</text><text x="0" y="10" font-size="5" fill="#2e75b6" font-family="Liberation Sans" font-weight="bold">2</text><text x="0" y="15" font-size="5" fill="#2e75b6" font-family="Liberation Sans" font-weight="bold">3</text><path d="M5 2h9M5 7.5h9M5 13h9" stroke="#666" stroke-width="1.2"/></svg>
<svg class="a" style="left:1021px;top:72px" width="6" height="4" viewBox="0 0 6 4"><path d="M0 0h6L3 3.5z" fill="#666"/></svg>
<svg class="a" style="left:1032px;top:67px" width="17" height="15" viewBox="0 0 17 15"><text x="0" y="4.5" font-size="5" fill="#2e75b6" font-family="Liberation Sans" font-weight="bold">1</text><text x="3.5" y="10" font-size="5" fill="#2e75b6" font-family="Liberation Sans" font-weight="bold">a</text><text x="7" y="15" font-size="5" fill="#2e75b6" font-family="Liberation Sans" font-weight="bold">i</text><path d="M5 2h11M9 7.5h7M11 13h5" stroke="#666" stroke-width="1.2"/></svg>
<svg class="a" style="left:1053px;top:72px" width="6" height="4" viewBox="0 0 6 4"><path d="M0 0h6L3 3.5z" fill="#666"/></svg>
<div class="a" style="left:1067px;top:64px;width:1px;height:22px;background:#d8d8d8"></div>
<svg class="a" style="left:1075px;top:67px" width="16" height="15" viewBox="0 0 16 15"><path d="M0.5 1.5h15M7 5.5h8.5M7 9.5h8.5M0.5 13.5h15" stroke="#666" stroke-width="1.2"/><path d="M5.5 7.5H1M3.5 5L1 7.5 3.5 10" stroke="#2e75b6" stroke-width="1.6" fill="none"/></svg>
<svg class="a" style="left:1097px;top:67px" width="16" height="15" viewBox="0 0 16 15"><path d="M0.5 1.5h15M7 5.5h8.5M7 9.5h8.5M0.5 13.5h15" stroke="#666" stroke-width="1.2"/><path d="M0.5 7.5H5M3 5l2.5 2.5L3 10" stroke="#2e75b6" stroke-width="1.6" fill="none"/></svg>
<div class="a" style="left:962px;top:87px;width:22px;height:23px;background:#c5c5c5"></div>
<svg class="a" style="left:966px;top:92px" width="14" height="12" viewBox="0 0 14 12"><path d="M0 1h14M0 4.5h10M0 8h14M0 11.5h10" stroke="#555" stroke-width="1.2"/></svg>
<svg class="a" style="left:988px;top:92px" width="14" height="12" viewBox="0 0 14 12"><path d="M0 1h14M2 4.5h10M0 8h14M2 11.5h10" stroke="#666" stroke-width="1.2"/></svg>
<svg class="a" style="left:1010px;top:92px" width="14" height="12" viewBox="0 0 14 12"><path d="M0 1h14M4 4.5h10M0 8h14M4 11.5h10" stroke="#666" stroke-width="1.2"/></svg>
<svg class="a" style="left:1032px;top:92px" width="14" height="12" viewBox="0 0 14 12"><path d="M0 1h14M0 4.5h14M0 8h14M0 11.5h14" stroke="#666" stroke-width="1.2"/></svg>
<div class="a" style="left:1054px;top:87px;width:1px;height:22px;background:#d8d8d8"></div>
<svg class="a" style="left:1062px;top:90px" width="15" height="17" viewBox="0 0 15 17"><path d="M3 1v15M0.5 3.5L3 1l2.5 2.5M0.5 13.5L3 16l2.5-2.5" stroke="#2e75b6" stroke-width="1.3" fill="none"/><path d="M7 3h8M7 6.5h8M7 10h8M7 13.5h8" stroke="#666" stroke-width="1.2"/></svg>
<svg class="a" style="left:1082px;top:97px" width="6" height="4" viewBox="0 0 6 4"><path d="M0 0h6L3 3.5z" fill="#666"/></svg>
<svg class="a" style="left:965px;top:113px" width="16" height="17" viewBox="0 0 16 17"><path d="M7 1l6 6-5 5-6-6z" fill="#fff" stroke="#555" stroke-width="1.1"/><path d="M12 7c1.5 1 2 2.5 1.5 4" stroke="#2e75b6" stroke-width="2" fill="none"/><rect x="0.5" y="13" width="15" height="3.5" fill="#fff" stroke="#888" stroke-width=".9"/></svg>
<svg class="a" style="left:987px;top:120px" width="6" height="4" viewBox="0 0 6 4"><path d="M0 0h6L3 3.5z" fill="#666"/></svg>
<div class="a" style="left:996px;top:110px;width:34px;height:23px;background:#c5c5c5"></div>
<svg class="a" style="left:1000px;top:114px" width="14" height="14" viewBox="0 0 14 14"><path d="M0.5 0.5h13M0.5 0.5v13M13.5 0.5v13M7 0.5v13M0.5 7h13" stroke="#555" stroke-width="1" stroke-dasharray="1 1.2"/><path d="M0 13.3h14" stroke="#555" stroke-width="1.4"/></svg>
<svg class="a" style="left:1020px;top:120px" width="7" height="4" viewBox="0 0 7 4"><path d="M0 0h7L3.5 4z" fill="#444"/></svg>
<div class="a" style="left:1034px;top:110px;width:1px;height:22px;background:#d8d8d8"></div>
<svg class="a" style="left:1043px;top:112px" width="15" height="18" viewBox="0 0 15 18"><text x="0" y="8" font-size="8.5" fill="#2e75b6" font-family="Liberation Sans" font-weight="bold">A</text><text x="0.5" y="17" font-size="8.5" fill="#8e55b8" font-family="Liberation Sans" font-weight="bold">Я</text><path d="M11.5 1v15M9 13.5l2.5 2.5 2.5-2.5" stroke="#555" stroke-width="1.2" fill="none"/></svg>
<div class="a" style="left:1065px;top:110px;width:1px;height:22px;background:#d8d8d8"></div>
<div class="a" style="left:1076px;top:112px;font-size:15px;font-weight:bold;line-height:17px;color:#666">¶</div>
<div class="a rl" style="left:1015px;top:138px">Абзац</div>
<svg class="a" style="left:1109px;top:141px" width="8" height="8" viewBox="0 0 8 8"><path d="M0.5 7.5v-7h7" fill="none" stroke="#888" stroke-width="1"/><path d="M3 3l4 4M4.5 7h2.5V4.5" stroke="#888" stroke-width="1" fill="none"/></svg>
<div class="a" style="left:1120px;top:65px;width:1px;height:84px;background:#d8d8d8"></div>
<!-- Styles -->
<svg class="a" style="left:1134px;top:67px" width="30" height="32" viewBox="0 0 30 32"><path d="M2 24L11 2h4l9 22h-4.5l-2.2-6H8.7l-2.2 6zM10 14h6.5L13.2 5z" fill="#2e75b6"/><path d="M17 30c2-1 2-4 4-5l2 2c-1 2-4 3-6 3z" fill="#2e75b6"/><path d="M21 25l7-10 1.5 1-6.5 10.5z" fill="#666"/></svg>
<div class="a" style="left:1131px;top:103px;font-size:12.5px;line-height:14px;color:#333">Стили</div>
<svg class="a" style="left:1145px;top:122px" width="6" height="4" viewBox="0 0 6 4"><path d="M0 0h6L3 3.5z" fill="#666"/></svg>
<div class="a rl" style="left:1125px;top:138px">Стили</div>
<svg class="a" style="left:1162px;top:141px" width="8" height="8" viewBox="0 0 8 8"><path d="M0.5 7.5v-7h7" fill="none" stroke="#888" stroke-width="1"/><path d="M3 3l4 4M4.5 7h2.5V4.5" stroke="#888" stroke-width="1" fill="none"/></svg>
<div class="a" style="left:1175px;top:65px;width:1px;height:84px;background:#d8d8d8"></div>
<!-- Editing -->
<div class="a" style="left:1208px;top:65px;width:29px;height:29px;background:#fff;border:1px solid #d0d0d0"></div>
<svg class="a" style="left:1215px;top:72px" width="14" height="14" viewBox="0 0 14 14"><circle cx="8.5" cy="5.5" r="3.8" fill="none" stroke="#2e75b6" stroke-width="1.6"/><path d="M6 8L1.5 12.5" stroke="#2e75b6" stroke-width="2"/></svg>
<div class="a" style="left:1179px;top:101px;font-size:12px;line-height:14px;color:#333">Редактирование</div>
<svg class="a" style="left:1220px;top:122px" width="6" height="4" viewBox="0 0 6 4"><path d="M0 0h6L3 3.5z" fill="#666"/></svg>
<div class="a" style="left:1271px;top:65px;width:1px;height:84px;background:#d8d8d8"></div>
<svg class="a" style="left:1342px;top:141px" width="11" height="7" viewBox="0 0 11 7"><path d="M1 6l4.5-4.5L10 6" stroke="#666" stroke-width="1.6" fill="none"/></svg>
<!-- DOC -->
<div class="a" style="left:662px;top:153px;width:701px;height:525px;background:#e6e6e6"></div>
<div class="a" style="left:666px;top:158px;width:14px;height:13px;background:#fff"></div>
<svg class="a" style="left:669px;top:160px" width="8" height="8" viewBox="0 0 8 8"><path d="M1.5 0v6.5H7.5" stroke="#555" stroke-width="1.8" fill="none"/></svg>
<div class="a" style="left:685px;top:159px;width:661px;height:10px;background:#c8c8c8"></div>
<div class="a" style="left:717px;top:159px;width:608px;height:10px;background:#fff"></div>
<div class="a rn" style="left:744.3px;top:157px;width:20px;text-align:center">1</div>
<div class="a rn" style="left:782.1px;top:157px;width:20px;text-align:center">2</div>
<div class="a rn" style="left:819.9px;top:157px;width:20px;text-align:center">3</div>
<div class="a rn" style="left:857.7px;top:157px;width:20px;text-align:center">4</div>
<div class="a rn" style="left:895.5px;top:157px;width:20px;text-align:center">5</div>
<div class="a rn" style="left:933.3px;top:157px;width:20px;text-align:center">6</div>
<div class="a rn" style="left:971.1px;top:157px;width:20px;text-align:center">7</div>
<div class="a rn" style="left:1008.9px;top:157px;width:20px;text-align:center">8</div>
<div class="a rn" style="left:1046.7px;top:157px;width:20px;text-align:center">9</div>
<div class="a rn" style="left:1084.5px;top:157px;width:20px;text-align:center">10</div>
<div class="a rn" style="left:1122.3px;top:157px;width:20px;text-align:center">11</div>
<div class="a rn" style="left:1160.1px;top:157px;width:20px;text-align:center">12</div>
<div class="a rn" style="left:1197.9px;top:157px;width:20px;text-align:center">13</div>
<div class="a rn" style="left:1235.7px;top:157px;width:20px;text-align:center">14</div>
<div class="a rn" style="left:1273.5px;top:157px;width:20px;text-align:center">15</div>
<div class="a rn" style="left:1311.3px;top:157px;width:20px;text-align:center">16</div>
<div class="a" style="left:687.6px;top:163px;width:1px;height:1.5px;background:#666"></div>
<div class="a" style="left:697.1px;top:161px;width:1px;height:5px;background:#666"></div>
<div class="a" style="left:706.5px;top:163px;width:1px;height:1.5px;background:#666"></div>
<div class="a" style="left:725.5px;top:163px;width:1px;height:1.5px;background:#666"></div>
<div class="a" style="left:734.9px;top:161px;width:1px;height:5px;background:#666"></div>
<div class="a" style="left:744.4px;top:163px;width:1px;height:1.5px;background:#666"></div>
<div class="a" style="left:763.2px;top:163px;width:1px;height:1.5px;background:#666"></div>
<div class="a" style="left:772.7px;top:161px;width:1px;height:5px;background:#666"></div>
<div class="a" style="left:782.1px;top:163px;width:1px;height:1.5px;background:#666"></div>
<div class="a" style="left:801.0px;top:163px;width:1px;height:1.5px;background:#666"></div>
<div class="a" style="left:810.5px;top:161px;width:1px;height:5px;background:#666"></div>
<div class="a" style="left:820.0px;top:163px;width:1px;height:1.5px;background:#666"></div>
<div class="a" style="left:838.9px;top:163px;width:1px;height:1.5px;background:#666"></div>
<div class="a" style="left:848.3px;top:161px;width:1px;height:5px;background:#666"></div>
<div class="a" style="left:857.8px;top:163px;width:1px;height:1.5px;background:#666"></div>
<div class="a" style="left:876.6px;top:163px;width:1px;height:1.5px;background:#666"></div>
<div class="a" style="left:886.1px;top:161px;width:1px;height:5px;background:#666"></div>
<div class="a" style="left:895.5px;top:163px;width:1px;height:1.5px;background:#666"></div>
<div class="a" style="left:914.5px;top:163px;width:1px;height:1.5px;background:#666"></div>
<div class="a" style="left:923.9px;top:161px;width:1px;height:5px;background:#666"></div>
<div class="a" style="left:933.4px;top:163px;width:1px;height:1.5px;background:#666"></div>
<div class="a" style="left:952.2px;top:163px;width:1px;height:1.5px;background:#666"></div>
<div class="a" style="left:961.7px;top:161px;width:1px;height:5px;background:#666"></div>
<div class="a" style="left:971.1px;top:163px;width:1px;height:1.5px;background:#666"></div>
<div class="a" style="left:990.0px;top:163px;width:1px;height:1.5px;background:#666"></div>
<div class="a" style="left:999.5px;top:161px;width:1px;height:5px;background:#666"></div>
<div class="a" style="left:1009.0px;top:163px;width:1px;height:1.5px;background:#666"></div>
<div class="a" style="left:1027.8px;top:163px;width:1px;height:1.5px;background:#666"></div>
<div class="a" style="left:1037.3px;top:161px;width:1px;height:5px;background:#666"></div>
<div class="a" style="left:1046.8px;top:163px;width:1px;height:1.5px;background:#666"></div>
<div class="a" style="left:1065.7px;top:163px;width:1px;height:1.5px;background:#666"></div>
<div class="a" style="left:1075.1px;top:161px;width:1px;height:5px;background:#666"></div>
<div class="a" style="left:1084.5px;top:163px;width:1px;height:1.5px;background:#666"></div>
<div class="a" style="left:1103.5px;top:163px;width:1px;height:1.5px;background:#666"></div>
<div class="a" style="left:1112.9px;top:161px;width:1px;height:5px;background:#666"></div>
<div class="a" style="left:1122.3px;top:163px;width:1px;height:1.5px;background:#666"></div>
<div class="a" style="left:1141.2px;top:163px;width:1px;height:1.5px;background:#666"></div>
<div class="a" style="left:1150.7px;top:161px;width:1px;height:5px;background:#666"></div>
<div class="a" style="left:1160.2px;top:163px;width:1px;height:1.5px;background:#666"></div>
<div class="a" style="left:1179.0px;top:163px;width:1px;height:1.5px;background:#666"></div>
<div class="a" style="left:1188.5px;top:161px;width:1px;height:5px;background:#666"></div>
<div class="a" style="left:1198.0px;top:163px;width:1px;height:1.5px;background:#666"></div>
<div class="a" style="left:1216.8px;top:163px;width:1px;height:1.5px;background:#666"></div>
<div class="a" style="left:1226.3px;top:161px;width:1px;height:5px;background:#666"></div>
<div class="a" style="left:1235.8px;top:163px;width:1px;height:1.5px;background:#666"></div>
<div class="a" style="left:1254.7px;top:163px;width:1px;height:1.5px;background:#666"></div>
<div class="a" style="left:1264.1px;top:161px;width:1px;height:5px;background:#666"></div>
<div class="a" style="left:1273.5px;top:163px;width:1px;height:1.5px;background:#666"></div>
<div class="a" style="left:1292.4px;top:163px;width:1px;height:1.5px;background:#666"></div>
<div class="a" style="left:1301.9px;top:161px;width:1px;height:5px;background:#666"></div>
<div class="a" style="left:1311.3px;top:163px;width:1px;height:1.5px;background:#666"></div>
<div class="a" style="left:1330.2px;top:163px;width:1px;height:1.5px;background:#666"></div>
<div class="a" style="left:1339.7px;top:161px;width:1px;height:5px;background:#666"></div>
<div class="a" style="left:705px;top:159px;width:11px;height:10px;background:#c8c8c8"></div>
<svg class="a" style="left:706px;top:160px" width="8" height="8" viewBox="0 0 8 8"><path d="M1.5 0v8M4 0v8M6.5 0v8M0 1.5h8M0 4h8M0 6.5h8" stroke="#808080" stroke-width=".7"/></svg>
<div class="a" style="left:812px;top:159px;width:12px;height:10px;background:#c8c8c8"></div>
<svg class="a" style="left:814px;top:160px" width="8" height="8" viewBox="0 0 8 8"><path d="M1.5 0v8M4 0v8M6.5 0v8M0 1.5h8M0 4h8M0 6.5h8" stroke="#808080" stroke-width=".7"/></svg>
<div class="a" style="left:937px;top:159px;width:10px;height:10px;background:#c8c8c8"></div>
<svg class="a" style="left:938px;top:160px" width="8" height="8" viewBox="0 0 8 8"><path d="M1.5 0v8M4 0v8M6.5 0v8M0 1.5h8M0 4h8M0 6.5h8" stroke="#808080" stroke-width=".7"/></svg>
<div class="a" style="left:1034px;top:159px;width:12px;height:10px;background:#c8c8c8"></div>
<svg class="a" style="left:1036px;top:160px" width="8" height="8" viewBox="0 0 8 8"><path d="M1.5 0v8M4 0v8M6.5 0v8M0 1.5h8M0 4h8M0 6.5h8" stroke="#808080" stroke-width=".7"/></svg>
<div class="a" style="left:1146px;top:159px;width:12px;height:10px;background:#c8c8c8"></div>
<svg class="a" style="left:1148px;top:160px" width="8" height="8" viewBox="0 0 8 8"><path d="M1.5 0v8M4 0v8M6.5 0v8M0 1.5h8M0 4h8M0 6.5h8" stroke="#808080" stroke-width=".7"/></svg>
<div class="a" style="left:1325px;top:159px;width:12px;height:10px;background:#c8c8c8"></div>
<svg class="a" style="left:1327px;top:160px" width="8" height="8" viewBox="0 0 8 8"><path d="M1.5 0v8M4 0v8M6.5 0v8M0 1.5h8M0 4h8M0 6.5h8" stroke="#808080" stroke-width=".7"/></svg>
<svg class="a" style="left:946px;top:155px" width="10" height="23" viewBox="0 0 10 23"><path d="M0.5 0.5h9v2L5 8 0.5 2.5z" fill="#fff" stroke="#777" stroke-width="1"/><path d="M5 8l4.5 6v1.5h-9V14z" fill="#fff" stroke="#777" stroke-width="1"/><rect x="0.5" y="15.5" width="9" height="7" fill="#fff" stroke="#777" stroke-width="1"/></svg>
<svg class="a" style="left:1034px;top:167px" width="10" height="9" viewBox="0 0 10 9"><path d="M5 0.5l4.5 5v3h-9v-3z" fill="#fff" stroke="#777" stroke-width="1"/></svg>
<div class="a" style="left:686px;top:178px;width:660px;height:483px;background:#fff"></div>
<div class="a" style="left:667px;top:178px;width:11px;height:483px;background:#fff"></div>
<div class="a" style="left:673.5px;top:181.1px;width:1.5px;height:1.2px;background:#666"></div>
<div class="a" style="left:672px;top:190.6px;width:5px;height:1px;background:#666"></div>
<div class="a" style="left:673.5px;top:200.0px;width:1.5px;height:1.2px;background:#666"></div>
<div class="a rn" style="left:663px;top:203.0px;width:20px;text-align:center;transform:rotate(-90deg)">12</div>
<div class="a" style="left:673.5px;top:219.0px;width:1.5px;height:1.2px;background:#666"></div>
<div class="a" style="left:672px;top:228.5px;width:5px;height:1px;background:#666"></div>
<div class="a" style="left:673.5px;top:237.9px;width:1.5px;height:1.2px;background:#666"></div>
<div class="a rn" style="left:663px;top:240.9px;width:20px;text-align:center;transform:rotate(-90deg)">13</div>
<div class="a" style="left:673.5px;top:256.9px;width:1.5px;height:1.2px;background:#666"></div>
<div class="a" style="left:672px;top:266.4px;width:5px;height:1px;background:#666"></div>
<div class="a" style="left:673.5px;top:275.8px;width:1.5px;height:1.2px;background:#666"></div>
<div class="a rn" style="left:663px;top:278.8px;width:20px;text-align:center;transform:rotate(-90deg)">14</div>
<div class="a" style="left:673.5px;top:294.8px;width:1.5px;height:1.2px;background:#666"></div>
<div class="a" style="left:672px;top:304.2px;width:5px;height:1px;background:#666"></div>
<div class="a" style="left:673.5px;top:313.7px;width:1.5px;height:1.2px;background:#666"></div>
<div class="a rn" style="left:663px;top:316.7px;width:20px;text-align:center;transform:rotate(-90deg)">15</div>
<div class="a" style="left:673.5px;top:332.7px;width:1.5px;height:1.2px;background:#666"></div>
<div class="a" style="left:672px;top:342.1px;width:5px;height:1px;background:#666"></div>
<div class="a" style="left:673.5px;top:351.6px;width:1.5px;height:1.2px;background:#666"></div>
<div class="a rn" style="left:663px;top:354.6px;width:20px;text-align:center;transform:rotate(-90deg)">16</div>
<div class="a" style="left:673.5px;top:370.6px;width:1.5px;height:1.2px;background:#666"></div>
<div class="a" style="left:672px;top:380.1px;width:5px;height:1px;background:#666"></div>
<div class="a" style="left:673.5px;top:389.5px;width:1.5px;height:1.2px;background:#666"></div>
<div class="a rn" style="left:663px;top:392.5px;width:20px;text-align:center;transform:rotate(-90deg)">17</div>
<div class="a" style="left:673.5px;top:408.5px;width:1.5px;height:1.2px;background:#666"></div>
<div class="a" style="left:672px;top:418.0px;width:5px;height:1px;background:#666"></div>
<div class="a" style="left:673.5px;top:427.4px;width:1.5px;height:1.2px;background:#666"></div>
<div class="a rn" style="left:663px;top:430.4px;width:20px;text-align:center;transform:rotate(-90deg)">18</div>
<div class="a" style="left:673.5px;top:446.4px;width:1.5px;height:1.2px;background:#666"></div>
<div class="a" style="left:672px;top:455.9px;width:5px;height:1px;background:#666"></div>
<div class="a" style="left:673.5px;top:465.3px;width:1.5px;height:1.2px;background:#666"></div>
<div class="a rn" style="left:663px;top:468.3px;width:20px;text-align:center;transform:rotate(-90deg)">19</div>
<div class="a" style="left:673.5px;top:484.3px;width:1.5px;height:1.2px;background:#666"></div>
<div class="a" style="left:672px;top:493.8px;width:5px;height:1px;background:#666"></div>
<div class="a" style="left:673.5px;top:503.2px;width:1.5px;height:1.2px;background:#666"></div>
<div class="a rn" style="left:663px;top:506.2px;width:20px;text-align:center;transform:rotate(-90deg)">20</div>
<div class="a" style="left:673.5px;top:522.2px;width:1.5px;height:1.2px;background:#666"></div>
<div class="a" style="left:672px;top:531.6px;width:5px;height:1px;background:#666"></div>
<div class="a" style="left:673.5px;top:541.1px;width:1.5px;height:1.2px;background:#666"></div>
<div class="a rn" style="left:663px;top:544.1px;width:20px;text-align:center;transform:rotate(-90deg)">21</div>
<div class="a" style="left:673.5px;top:560.1px;width:1.5px;height:1.2px;background:#666"></div>
<div class="a" style="left:672px;top:569.6px;width:5px;height:1px;background:#666"></div>
<div class="a" style="left:673.5px;top:579.0px;width:1.5px;height:1.2px;background:#666"></div>
<div class="a rn" style="left:663px;top:582.0px;width:20px;text-align:center;transform:rotate(-90deg)">22</div>
<div class="a" style="left:673.5px;top:598.0px;width:1.5px;height:1.2px;background:#666"></div>
<div class="a" style="left:672px;top:607.5px;width:5px;height:1px;background:#666"></div>
<div class="a" style="left:673.5px;top:616.9px;width:1.5px;height:1.2px;background:#666"></div>
<div class="a rn" style="left:663px;top:619.9px;width:20px;text-align:center;transform:rotate(-90deg)">23</div>
<div class="a" style="left:673.5px;top:635.9px;width:1.5px;height:1.2px;background:#666"></div>
<div class="a" style="left:672px;top:645.4px;width:5px;height:1px;background:#666"></div>
<div class="a" style="left:673.5px;top:654.8px;width:1.5px;height:1.2px;background:#666"></div>
<div class="a" style="left:667px;top:316px;width:11px;height:7px;background:#c8c8c8"></div>
<div class="a" style="left:667px;top:512px;width:11px;height:7px;background:#c8c8c8"></div>

<!-- document table (clipped) -->
<div class="a" style="left:686px;top:178px;width:660px;height:483px;overflow:hidden">
<div class="a" style="left:-686px;top:-178px;width:1366px;height:768px">
<!-- borders -->
<div class="a tb" style="left:709px;top:100px;width:1px;height:700px"></div>
<div class="a tb" style="left:819px;top:100px;width:1px;height:700px"></div>
<div class="a tb" style="left:944px;top:100px;width:1px;height:700px"></div>
<div class="a tb" style="left:1041px;top:100px;width:1px;height:700px"></div>
<div class="a tb" style="left:1153px;top:100px;width:1px;height:700px"></div>
<div class="a tb" style="left:1332px;top:100px;width:1px;height:700px"></div>
<div class="a tb" style="left:709px;top:318px;width:624px;height:1px"></div>
<div class="a tb" style="left:709px;top:513px;width:624px;height:1px"></div>
<!-- row 1 -->
<div class="a dt" style="left:953px;top:165.7px">ою-өрнек<br>түрлері мен<br>олардың<br>атауын есіңе<br>түсір.<br>2.Ою-<br>өрнектер<br>нені<br>білдіреді?</div>
<div class="a dt" style="left:1049px;top:165.7px">жауап береді.</div>
<!-- row 2 -->
<div class="a dt" style="left:718px;top:319.8px">Жұптық<br>жұмыс</div>
<div class="a dt" style="left:827px;top:319.8px">Төмендегі<br>кестеге қарап,<br>кейбір ою-<br>өрнектерді есіңе<br>түсір.</div>
<div class="a dt" style="left:1049px;top:319.8px"><b><i>Дескриптор:<br>Жалпы - 3<br>балл.</i></b><br>-</div>
<div class="a dt" style="left:1161px;top:319.8px">Оқулық<br>4-сынып<br><br>Жұмыс дәптерлері.<br>Құрал-саймандары</div>
<!-- row 3 -->
<div class="a dt" style="left:711px;top:515.3px;width:108px;text-align:center">Сабақтың<br>соңы<br>Ой толғаныс.<br>Рефлексия<br>7 мин.</div>
<div class="a dt" style="left:827px;top:515.3px"><b>«Еркін<br>микрофон»<br>әдісі.</b> Мұғалім<br>сабақты<br>қорытындылау<br>мақсатында<br>оқушылардың<br>сабаққа деген<br>көзқарасын</div>
<div class="a dt" style="left:953px;top:515.3px">Оқушылар<br>бүгінгі<br>сабақтың<br>мақсаты,<br>тақырыбы<br>бойынша өз<br>ойын айту<br>арқылы<br>сабаққа</div>
<div class="a dt" style="left:1049px;top:515.3px">Мұғалім<br>оқушыларды<br><b>«Жапондық<br>бағалау»</b> әдісі<br>арқылы<br>бағалайды.<br>Яғни <i>«Дұрыс<br>келісемін»,<br>«Толықтырам</i></div>
<!-- table images -->
<svg class="a" style="left:718px;top:353px" width="48" height="48" viewBox="0 0 48 48" id="pf1">
<defs><linearGradient id="pfg" x1="0" y1="0" x2="1" y2="1"><stop offset="0" stop-color="#6aa8f0"/><stop offset="1" stop-color="#1a4fb8"/></linearGradient>
<linearGradient id="pfi" x1="0" y1="0" x2="1" y2="1"><stop offset="0" stop-color="#f4f4f4"/><stop offset="1" stop-color="#9a9a9a"/></linearGradient>
<linearGradient id="pcl" x1="0" y1="0" x2="1" y2="0"><stop offset="0" stop-color="#7ad070"/><stop offset="1" stop-color="#127a18"/></linearGradient></defs>
<g transform="rotate(-14 22 24)"><rect x="4" y="6" width="34" height="34" rx="4" fill="url(#pfg)" stroke="#1a3a90" stroke-width="1.4"/><rect x="8.5" y="10.5" width="25" height="25" fill="#dfeaf8"/><rect x="10" y="12" width="22" height="22" fill="url(#pfi)"/>
<path d="M4 10l6-4v6zM38 10l-6-4v6zM4 36l6 4v-6zM38 36l-6 4v-6z" fill="#f0c020"/></g>
<path d="M26 25l5-5 16 17-2 4-3 2z" fill="url(#pcl)" stroke="#0a5010" stroke-width=".8"/><path d="M20 21l6 4 5-5-4-6z" fill="#f3dcb0"/><path d="M20 21l2.5 1.5 1-2.5z" fill="#333"/>
</svg>
<svg class="a" style="left:755px;top:357px" width="33" height="33" viewBox="0 0 33 33">
<defs><linearGradient id="kb" x1="0" y1="0" x2="0" y2="1"><stop offset="0" stop-color="#d6ecfb"/><stop offset="1" stop-color="#7ab6ea"/></linearGradient></defs>
<rect x="0.5" y="0.5" width="32" height="32" rx="7" fill="url(#kb)"/>
<circle cx="10" cy="16" r="5" fill="#f3d6b8"/><path d="M5 15c0-4 2.5-6 5-6s5 2 5 6c-2-2-6-2-10 0z" fill="#222"/><path d="M5.5 25c0-3 2-4.5 4.5-4.5s4.5 1.5 4.5 4.5z" fill="#4a5a8a"/>
<circle cx="22" cy="16" r="5" fill="#f3d6b8"/><path d="M17 15c0-4 2.5-6 5-6s5 2 5 6c-2-2-6-2-10 0z M26 12c2 0 3 2 2.5 4z" fill="#222"/><path d="M17.5 25c0-3 2-4.5 4.5-4.5s4.5 1.5 4.5 4.5z" fill="#e02070"/>
</svg>
<svg class="a" style="left:718px;top:599px" width="48" height="48" viewBox="0 0 48 48">
<g transform="rotate(-14 22 24)"><rect x="4" y="6" width="34" height="34" rx="4" fill="url(#pfg)" stroke="#1a3a90" stroke-width="1.4"/><rect x="8.5" y="10.5" width="25" height="25" fill="#dfeaf8"/><rect x="10" y="12" width="22" height="22" fill="url(#pfi)"/>
<path d="M4 10l6-4v6zM38 10l-6-4v6zM4 36l6 4v-6zM38 36l-6 4v-6z" fill="#f0c020"/></g>
<path d="M26 25l5-5 16 17-2 4-3 2z" fill="url(#pcl)" stroke="#0a5010" stroke-width=".8"/><path d="M20 21l6 4 5-5-4-6z" fill="#f3dcb0"/><path d="M20 21l2.5 1.5 1-2.5z" fill="#333"/>
</svg>
<svg class="a" style="left:760px;top:602px" width="35" height="35" viewBox="0 0 35 35">
<defs><linearGradient id="gb" x1="0" y1="0" x2="0" y2="1"><stop offset="0" stop-color="#9ccc3a"/><stop offset="1" stop-color="#5a9a1a"/></linearGradient></defs>
<rect x="0.5" y="0.5" width="34" height="34" rx="7" fill="url(#gb)"/>
<path d="M8 32c0-6 4-9 9.5-9s9.5 3 9.5 9z" fill="#3a4a7a"/>
<circle cx="17.5" cy="15" r="7.5" fill="#f3d6b8"/><path d="M10 15c-1-6 3-10 7.5-10S26 8 25.5 14c-3-3-9-4-15.5 1z" fill="#111"/>
<circle cx="15" cy="16.5" r=".9" fill="#222"/><circle cx="20.5" cy="16.5" r=".9" fill="#222"/>
</svg>
<!-- ornament table image -->
<svg class="a" style="left:828px;top:403px" width="112" height="109" viewBox="0 0 112 109">
<rect width="112" height="109" fill="#fff"/>
<rect x="0" y="0" width="37.5" height="109" fill="#bde2f2"/>
<path d="M37.5 0v109M74.5 0v109M0 27.3h112M0 54.5h112M0 80.5h112" stroke="#d4d4d4" stroke-width=".8"/>
<rect x=".4" y=".4" width="111.2" height="108.2" fill="none" stroke="#c8c8c8" stroke-width=".8"/>
<g fill="#7a8a90"><rect x="3" y="13" width="18" height="1.3"/><rect x="3" y="40" width="24" height="1.3"/><rect x="3" y="66" width="22" height="1.3"/><rect x="3" y="93" width="24" height="1.3"/></g>
<g fill="#999"><rect x="46" y="23.5" width="19" height="1.3"/><rect x="85" y="23.5" width="15" height="1.3"/><rect x="47" y="50.5" width="18" height="1.3"/><rect x="89" y="50.5" width="9" height="1.3"/><rect x="48" y="77" width="15" height="1.3"/><rect x="88" y="77" width="12" height="1.3"/><rect x="50" y="104.5" width="12" height="1.3"/><rect x="86" y="104.5" width="13" height="1.3"/></g>
<g fill="#1d2f8e"><path d="M43.5 19h25v2.2h-25z"/><path d="M50 19.5c-4-2-4-9 1.5-10 4-.5 6 3 3.5 5.5-1.5 1.2-3 0-2.5-1.5 1 1 2.5-1 .5-2-3 0-3.5 4-1 6.5zM63 19.5c4-2 4-9-1.5-10-4-.5-6 3-3.5 5.5 1.5 1.2 3 0 2.5-1.5-1 1-2.5-1-.5-2 3 0 3.5 4 1 6.5z"/><path d="M54.5 19.5c0-6 1-10 2-15 1 5 2 9 2 15z"/><circle cx="56.5" cy="4" r="1.8"/></g>
<g fill="none" stroke="#0a9a3a" stroke-width="2.8"><path d="M80 14c-3-5 2-10 7-8s3 7-1 6M102 12c3 5-2 10-7 8s-3-7 1-6M84 19c5 0 8-10 14-10"/></g>
<g><path d="M55 34c5-5 11-4 10 3-1 5-6 7-10 6z" fill="#0a9a3a"/><path d="M50 51l6-9M53 47c-2-1-4-3-3-6" stroke="#7ac070" stroke-width=".9" fill="none"/></g>
<g fill="#1a90d8"><rect x="92.3" y="30" width="2" height="21"/><rect x="88.5" y="35.5" width="9" height="2"/><path d="M85.5 42c3 0 5.5 2 7.5 4 2-2 4.5-4 7.5-4-2 3.5-4.5 5.5-7.5 6.5-3-1-5.5-3-7.5-6.5z"/></g>
<g fill="none" stroke="#3ba0a6" stroke-width="2.8"><path d="M41 67l5-7 5 7-5 7zM52 67l5-7 5 7-5 7zM63 67l5-7 5 7-5 7z"/></g>
<g fill="none" stroke="#e040a8" stroke-width="2"><rect x="79" y="59.5" width="29" height="15"/><path d="M83 71.5v-8h6v5h-3M92 71.5v-8h6v5h-3M101 71.5v-8h5v5h-2"/></g>
<g fill="#a02a80"><path d="M56 84l4.5 5.5 4.5-5.5-1.2 7.5 6.5 2.5-6.5 2.5 1.2 7.5-4.5-5.5-4.5 5.5 1.2-7.5-6.5-2.5 6.5-2.5z"/></g>
<path d="M96 83c6 3 7 14 1 18-4 3-9 3-11 1 5 0 9-2 10-7 1-4 0-9 0-12z" fill="#f3e000"/>
</svg>
<!-- microphone -->
<svg class="a" style="left:1176px;top:518px" width="66" height="68" viewBox="0 0 66 68">
<defs><radialGradient id="mh" cx="40%" cy="35%" r="70%"><stop offset="0" stop-color="#7a7a7a"/><stop offset="1" stop-color="#262626"/></radialGradient>
<linearGradient id="mb" x1="0" y1="0" x2="1" y2="1"><stop offset="0" stop-color="#2a2a2a"/><stop offset=".45" stop-color="#8c8c8c"/><stop offset="1" stop-color="#303030"/></linearGradient><filter id="msh"><feGaussianBlur stdDeviation="1.8"/></filter>
<pattern id="mesh" width="2.2" height="2.2" patternUnits="userSpaceOnUse"><path d="M0 0L2.2 2.2M2.2 0L0 2.2" stroke="#111" stroke-width=".5"/></pattern></defs>
<g filter="url(#msh)" opacity=".4"><circle cx="49" cy="18" r="11.5" fill="#444"/><path d="M41 27L10 62l5 4 33-33z" fill="#444"/></g>
<path d="M36 21.5L5.5 57.5l4 3.5 32.5-33.5z" fill="url(#mb)"/>
<path d="M6 58l-3.5 5 1.5 1.5 4-4z" fill="#333"/><path d="M2.5 63c-1 1-1.5 2-.5 3" stroke="#444" stroke-width="1" fill="none"/>
<circle cx="45.5" cy="13" r="11.5" fill="url(#mh)"/>
<circle cx="45.5" cy="13" r="11.5" fill="url(#mesh)" opacity=".6"/>
<path d="M35.5 18.5c4 4.5 10.5 6.5 16 3.5" stroke="#e6e6e6" stroke-width="2.6" fill="none"/>
</svg>
<!-- japanese assessment photo -->
<svg class="a" style="left:1198px;top:591px" width="91" height="70" viewBox="0 0 91 70">
<defs><filter id="pb"><feGaussianBlur stdDeviation=".5"/></filter></defs>
<rect width="91" height="70" fill="#f6f4f0"/>
<g filter="url(#pb)">
<circle cx="50" cy="42" r="42" fill="none" stroke="#d8c080" stroke-width="1.2"/>
<g fill="#f5a623"><ellipse cx="8" cy="8" rx="13" ry="11"/><ellipse cx="24" cy="3" rx="7" ry="5"/><ellipse cx="88" cy="62" rx="9" ry="12"/><ellipse cx="3" cy="55" rx="4" ry="8" opacity=".6"/></g>
<g fill="#fbd36a" opacity=".8"><ellipse cx="6" cy="14" rx="6" ry="3"/><ellipse cx="14" cy="4" rx="3" ry="6"/></g>
<circle cx="10" cy="7" r="3.5" fill="#b8c860"/>
<rect x="28" y="3" width="58" height="3.5" fill="#333" opacity=".75"/>
<rect x="2" y="16" width="21" height="32" rx="3" fill="#fff" stroke="#ddd" stroke-width=".6"/>
<rect x="34" y="15" width="21" height="36" rx="3" fill="#fff" stroke="#ddd" stroke-width=".6"/>
<rect x="65" y="18" width="21" height="34" rx="3" fill="#fff" stroke="#ddd" stroke-width=".6"/>
<path d="M7 44v-9c0-2 1-3 3-3h2.5V20a1.6 1.6 0 0 1 3.2 0v13c1 0 2 1 2 3v4c0 2-1 4-3 4zM10 36h6M10 39h6" stroke="#333" stroke-width=".9" fill="none"/>
<path d="M39 48c-2-4-2-9 0-11l1.5-2V20a1.4 1.4 0 0 1 2.8 0v12V19a1.4 1.4 0 0 1 2.8 0v16c2.5 2 2.5 9 0 13zM41 40c2 1 4 1 6 0" stroke="#333" stroke-width=".9" fill="none"/>
<path d="M70 48V35c0-6 2-9 5.5-9s5.5 3 5.5 9v13zM71 33c2-2 6-2 9 0" stroke="#333" stroke-width=".9" fill="none"/>
<g fill="#444" opacity=".75"><rect x="4" y="52" width="12" height="1.3"/><rect x="4" y="55.5" width="14" height="1.3"/><rect x="29" y="60" width="29" height="1.3"/><rect x="30" y="64" width="31" height="1.3"/><rect x="63" y="62" width="14" height="1.3"/><rect x="63" y="66" width="18" height="1.3"/></g>
</g>
</svg>

</div>
</div>
<!-- word status bar -->
<div class="a" style="left:662px;top:661px;width:701px;height:17px;background:#e6e6e6"></div>
<div class="a" style="left:662px;top:678px;width:701px;height:22px;background:#f1f1f1;border-top:1px solid #d6d6d6"></div>
<div class="a st" style="left:669px">Страница 3 из 32</div>
<div class="a st" style="left:779px">Число слов: 5798</div>
<svg class="a" style="left:888px;top:683px" width="15" height="14" viewBox="0 0 15 14"><path d="M0.5 1h3c1.5 0 3 .8 3.5 2v10c-.5-1-2-1.5-3.5-1.5h-3z" fill="none" stroke="#666" stroke-width="1"/><path d="M7 3c.5-1.2 1.5-2 3-2" stroke="#666" stroke-width="1" fill="none"/><path d="M10 4l4 4M14 4l-4 4" stroke="#666" stroke-width="1.1"/></svg>
<div class="a st" style="left:919px">казахский</div>
<svg class="a" style="left:1072px;top:683px" width="14" height="13" viewBox="0 0 14 13"><path d="M0.5 1h5.5c.5 0 1 .3 1 1v10.5c0-.5-.5-1-1-1H.5zM13.5 1H8c-.5 0-1 .3-1 1v10.5c0-.5.5-1 1-1h5.5z" fill="none" stroke="#666" stroke-width="1"/><path d="M2 3.5h3.5M2 6h3.5M2 8.5h3.5M8.5 3.5H12M8.5 6H12M8.5 8.5H12" stroke="#666" stroke-width=".8"/></svg>
<div class="a" style="left:1098px;top:679px;width:38px;height:21px;background:#c8c8c8"></div>
<svg class="a" style="left:1110px;top:683px" width="14" height="13" viewBox="0 0 14 13"><rect x=".5" y=".5" width="13" height="12" fill="none" stroke="#555" stroke-width="1"/><path d="M3 3.5h8M3 5.5h8M3 7.5h8M3 9.5h8" stroke="#555" stroke-width=".9"/></svg>
<svg class="a" style="left:1147px;top:683px" width="16" height="14" viewBox="0 0 16 14"><rect x=".5" y=".5" width="11" height="10" fill="none" stroke="#666" stroke-width="1"/><path d="M.5 3h11M2.5 5.5h7M2.5 7.5h5" stroke="#666" stroke-width=".9"/><circle cx="12" cy="10" r="3.3" fill="#f1f1f1" stroke="#666" stroke-width="1"/><path d="M9 10h6M12 7c-1 2-1 4 0 6M12 7c1 2 1 4 0 6" stroke="#666" stroke-width=".6" fill="none"/></svg>
<div class="a" style="left:1179px;top:688px;width:6px;height:2px;background:#555"></div>
<div class="a" style="left:1190px;top:688px;width:99px;height:1px;background:#a0a0a0"></div>
<div class="a" style="left:1237px;top:683px;width:4px;height:10px;background:#555"></div>
<svg class="a" style="left:1292px;top:684px" width="9" height="9" viewBox="0 0 9 9"><path d="M4.5 0v9M0 4.5h9" stroke="#555" stroke-width="2"/></svg>
<div class="a st" style="left:1315px">100%</div>
<!-- TASKBAR -->
<div class="a" style="left:0;top:728px;width:1366px;height:40px;background:#0a0d13"></div>
<svg class="a" style="left:16px;top:740px" width="17" height="17" viewBox="0 0 17 17"><path d="M0 2.4l7-1v6.6H0zM8 1.2L17 0v8H8zM0 9h7v6.6l-7-1zM8 9h9v8l-9-1.2z" fill="#fff"/></svg>
<svg class="a" style="left:63px;top:739px" width="18" height="19" viewBox="0 0 18 19"><circle cx="11" cy="7" r="5.8" fill="none" stroke="#fff" stroke-width="1.4"/><path d="M7 11.2L1 17.5" stroke="#fff" stroke-width="1.6"/></svg>
<svg class="a" style="left:109px;top:742px" width="21" height="14" viewBox="0 0 21 14"><rect x="4" y="0.7" width="13" height="12.6" fill="none" stroke="#fff" stroke-width="1.3"/><path d="M2 2.5H0.7v9H2M19 2.5h1.3v9H19" stroke="#fff" stroke-width="1.3" fill="none"/></svg>
<svg class="a" style="left:159px;top:737px" width="23" height="23" viewBox="0 0 24 24"><circle cx="12" cy="12" r="11.5" fill="#db4437"/><path d="M12 12L2 6.2A11.5 11.5 0 0 1 22 6.2z" fill="#db4437"/><path d="M12 12h11.4A11.5 11.5 0 0 1 6.2 22z" fill="#f4c20d"/><path d="M12 12L6.2 22A11.5 11.5 0 0 1 2 6.2z" fill="#0f9d58"/><circle cx="12" cy="12" r="5.4" fill="#fff"/><circle cx="12" cy="12" r="4.3" fill="#4285f4"/></svg>
<div class="a" style="left:196px;top:728px;width:44px;height:40px;background:#2f3237"></div>
<div class="a" style="left:240px;top:728px;width:1px;height:40px;background:#45484d"></div>
<svg class="a" style="left:208px;top:737px" width="24" height="22" viewBox="0 0 24 22"><rect x="8" y="1" width="15" height="20" fill="#fff"/><path d="M11 5h10M11 8h10M11 11h10M11 14h10M11 17h10" stroke="#2b579a" stroke-width="1.2"/><path d="M0 3l13-2.5v21L0 19z" fill="#2b579a"/><path d="M2.5 7l1.6 8 2-6 2 6 1.6-8" stroke="#fff" stroke-width="1.3" fill="none"/></svg>
<svg class="a" style="left:257px;top:737px" width="23" height="21" viewBox="0 0 23 21"><path d="M0 2h8l2 2h13v17H0z" fill="#e8b33c"/><path d="M0 7h23v14H0z" fill="#f5d36b"/><path d="M6 14h11v7H6z" fill="#1e88d8"/><path d="M9 17h5v4H9z" fill="#f5d36b"/></svg>
<div class="a" style="left:151px;top:766px;width:39px;height:2px;background:#76b9ed"></div>
<div class="a" style="left:196px;top:766px;width:44px;height:2px;background:#76b9ed"></div>
<div class="a" style="left:249px;top:766px;width:40px;height:2px;background:#76b9ed"></div>
<svg class="a" style="left:1121px;top:743px" width="13" height="8" viewBox="0 0 13 8"><path d="M1 7.5L6.5 1.5 12 7.5" stroke="#fff" stroke-width="1.3" fill="none"/></svg>
<svg class="a" style="left:1144px;top:744px" width="16" height="10" viewBox="0 0 16 10"><rect x=".6" y=".6" width="13" height="8.8" fill="none" stroke="#fff" stroke-width="1.2"/><rect x="2.5" y="2.5" width="5" height="5" fill="#fff"/><rect x="14" y="3" width="1.6" height="4" fill="#fff"/></svg>
<svg class="a" style="left:1169px;top:741px" width="15" height="15" viewBox="0 0 15 15"><path d="M1 13A12 12 0 0 1 13 1M4 13.5A9 9 0 0 1 13.5 4M7 14A6 6 0 0 1 14 7" stroke="#fff" stroke-width="1.1" fill="none"/><circle cx="12.5" cy="12.5" r="1.6" fill="#fff"/></svg>
<svg class="a" style="left:1190px;top:741px" width="18" height="15" viewBox="0 0 18 15"><path d="M1 5h3l4-4v13l-4-4H1z" fill="none" stroke="#fff" stroke-width="1.1"/><path d="M10.5 5a3.5 3.5 0 0 1 0 5M12.5 3a6.5 6.5 0 0 1 0 9M14.5 1a9.5 9.5 0 0 1 0 13" stroke="#fff" stroke-width="1.1" fill="none"/></svg>
<div class="a" style="left:1218px;top:740px;font-size:12px;line-height:14px;color:#fff">ҚАЗ</div>
<div class="a" style="left:1253px;top:731px;width:54px;text-align:center;font-size:12px;line-height:15px;color:#fff">12:38<br>01.12.2020</div>
<svg class="a" style="left:1325px;top:740px" width="17" height="16" viewBox="0 0 17 16"><path d="M.6.6h15.8v11.3H9.5L7 14.5 4.5 11.9H.6z" fill="none" stroke="#fff" stroke-width="1.1"/></svg>
<div class="a" style="left:1361px;top:728px;width:1px;height:40px;background:#5a5d63"></div>
</body></html>
